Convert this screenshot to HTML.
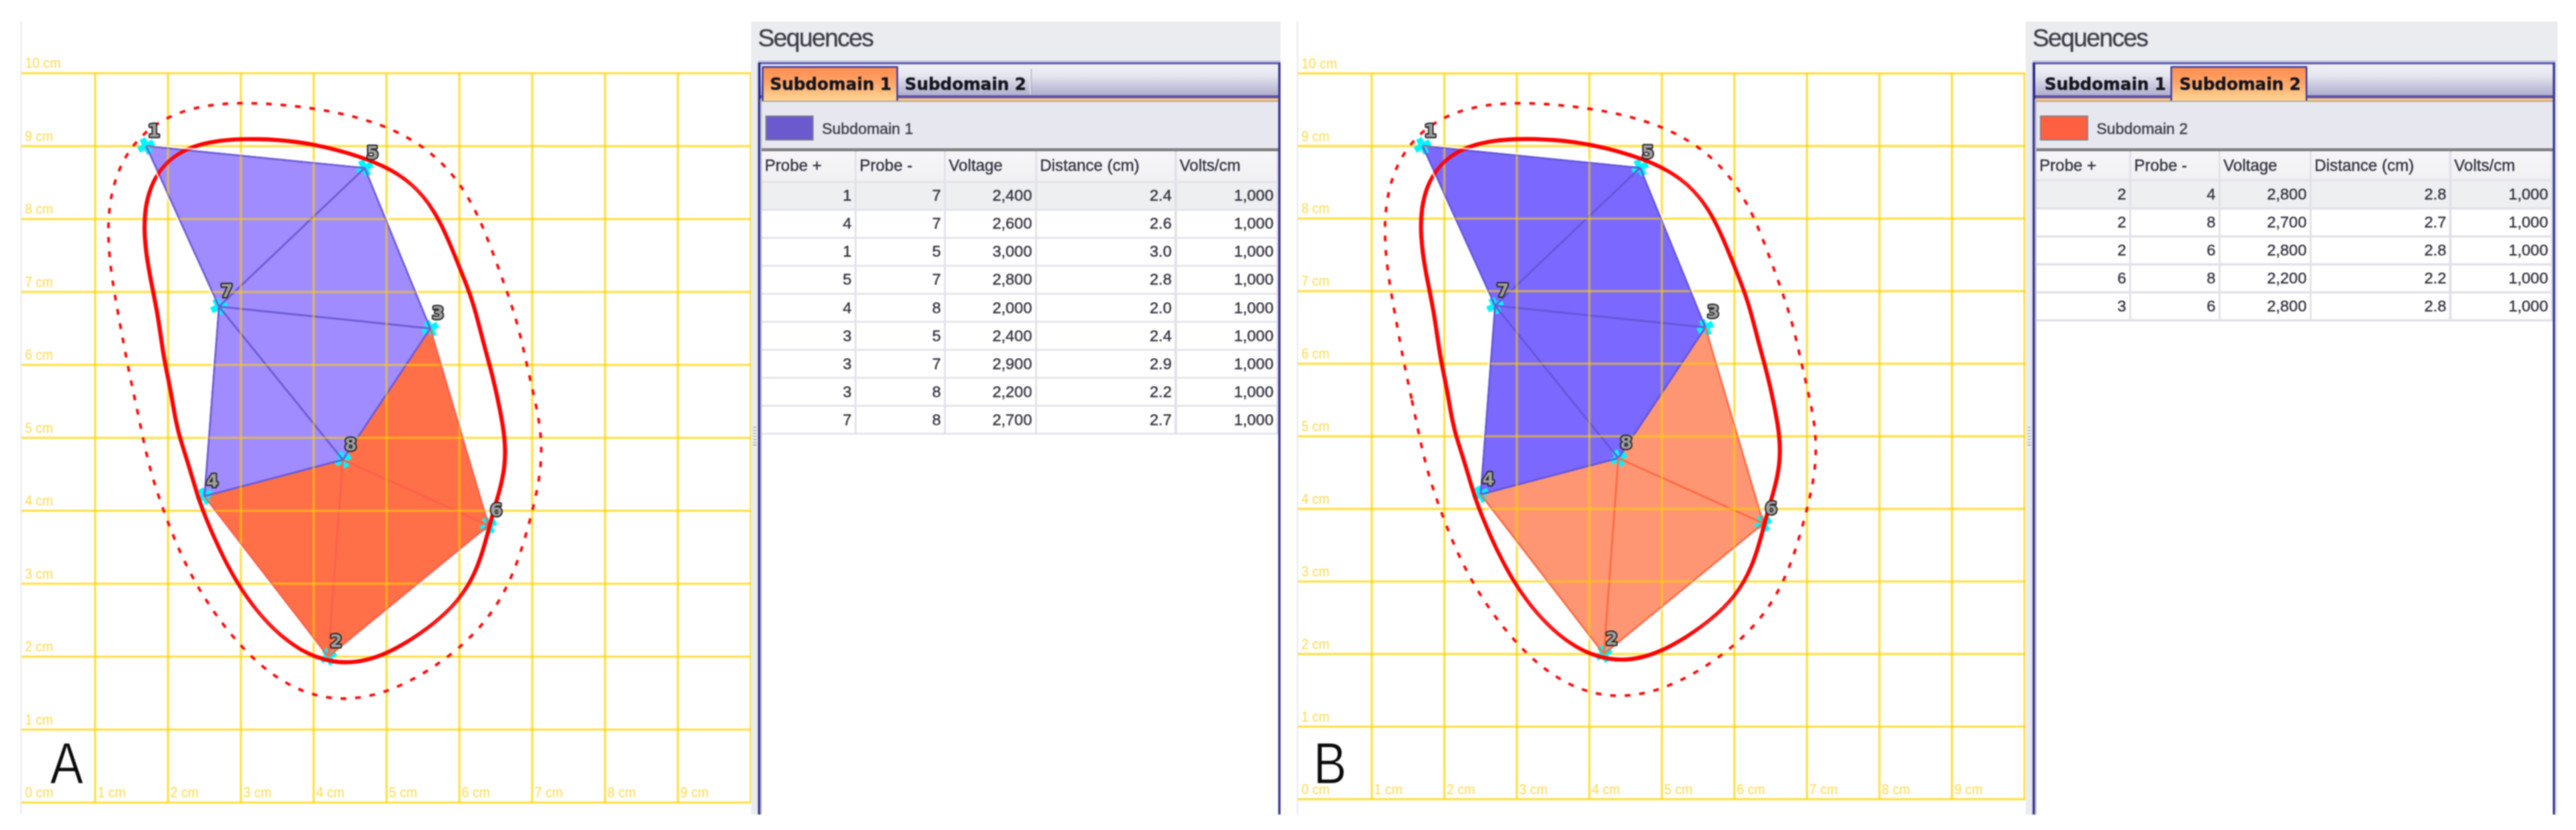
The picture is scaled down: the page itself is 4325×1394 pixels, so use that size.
<!DOCTYPE html>
<html lang="en"><head><meta charset="utf-8"><title>Sequences</title>
<style>
html,body{margin:0;padding:0;background:#fff}
body{width:4325px;height:1394px;position:relative;overflow:hidden;font-family:"Liberation Sans", "DejaVu Sans", sans-serif}
svg{position:absolute;left:0;top:0;filter:blur(1px)}
.seq{position:absolute;background:#EBECEF;overflow:hidden;margin:0;filter:blur(1px)}
.seq div{position:absolute}
.t{position:absolute;white-space:nowrap;margin:0;font-weight:normal;-webkit-text-stroke:0.45px currentColor;font-family:"Liberation Sans", "DejaVu Sans", sans-serif}
.b{font-weight:bold}
.dj{font-family:"DejaVu Sans","Liberation Sans",sans-serif}
</style></head><body>
<svg width="4325" height="1394" viewBox="0 0 4325 1394">
<g class="plot">
<rect x="34.0" y="36" width="3" height="1332" fill="#ECEEF2"/>
<g stroke="#FFD400" stroke-opacity="0.7" stroke-width="3.9"><line x1="36.0" y1="1347.9" x2="1262.0" y2="1347.9"/><line x1="36.0" y1="1225.4" x2="1262.0" y2="1225.4"/><line x1="36.0" y1="1102.9" x2="1262.0" y2="1102.9"/><line x1="36.0" y1="980.4" x2="1262.0" y2="980.4"/><line x1="36.0" y1="857.9" x2="1262.0" y2="857.9"/><line x1="36.0" y1="735.4" x2="1262.0" y2="735.4"/><line x1="36.0" y1="612.9" x2="1262.0" y2="612.9"/><line x1="36.0" y1="490.4" x2="1262.0" y2="490.4"/><line x1="36.0" y1="367.9" x2="1262.0" y2="367.9"/><line x1="36.0" y1="245.4" x2="1262.0" y2="245.4"/><line x1="36.0" y1="122.9" x2="1262.0" y2="122.9"/><line x1="159.8" y1="122.9" x2="159.8" y2="1347.9"/><line x1="282.1" y1="122.9" x2="282.1" y2="1347.9"/><line x1="404.4" y1="122.9" x2="404.4" y2="1347.9"/><line x1="526.7" y1="122.9" x2="526.7" y2="1347.9"/><line x1="649.0" y1="122.9" x2="649.0" y2="1347.9"/><line x1="771.3" y1="122.9" x2="771.3" y2="1347.9"/><line x1="893.6" y1="122.9" x2="893.6" y2="1347.9"/><line x1="1015.9" y1="122.9" x2="1015.9" y2="1347.9"/><line x1="1138.2" y1="122.9" x2="1138.2" y2="1347.9"/><line x1="1260.5" y1="122.9" x2="1260.5" y2="1347.9"/></g>
<polygon points="343.2,833.4 575.6,772.2 722.4,551.7 820.2,882.4 551.2,1102.9" fill="#FF7048"/><polygon points="245.4,245.4 612.3,282.2 722.4,551.7 575.6,772.2 343.2,833.4 367.7,514.9" fill="#A18CFF"/>
<g transform="translate(245.4 245.4) rotate(18)" stroke="#00F6FF" stroke-width="10.5"><line x1="-10" y1="-10" x2="10" y2="10"/><line x1="-10" y1="10" x2="10" y2="-10"/></g>
<g transform="translate(551.2 1102.9) rotate(18)" stroke="#00F6FF" stroke-width="10.5"><line x1="-10" y1="-10" x2="10" y2="10"/><line x1="-10" y1="10" x2="10" y2="-10"/></g>
<g transform="translate(722.4 551.7) rotate(18)" stroke="#00F6FF" stroke-width="10.5"><line x1="-10" y1="-10" x2="10" y2="10"/><line x1="-10" y1="10" x2="10" y2="-10"/></g>
<g transform="translate(343.2 833.4) rotate(18)" stroke="#00F6FF" stroke-width="10.5"><line x1="-10" y1="-10" x2="10" y2="10"/><line x1="-10" y1="10" x2="10" y2="-10"/></g>
<g transform="translate(612.3 282.2) rotate(18)" stroke="#00F6FF" stroke-width="10.5"><line x1="-10" y1="-10" x2="10" y2="10"/><line x1="-10" y1="10" x2="10" y2="-10"/></g>
<g transform="translate(820.2 882.4) rotate(18)" stroke="#00F6FF" stroke-width="10.5"><line x1="-10" y1="-10" x2="10" y2="10"/><line x1="-10" y1="10" x2="10" y2="-10"/></g>
<g transform="translate(367.7 514.9) rotate(18)" stroke="#00F6FF" stroke-width="10.5"><line x1="-10" y1="-10" x2="10" y2="10"/><line x1="-10" y1="10" x2="10" y2="-10"/></g>
<g transform="translate(575.6 772.2) rotate(18)" stroke="#00F6FF" stroke-width="10.5"><line x1="-10" y1="-10" x2="10" y2="10"/><line x1="-10" y1="10" x2="10" y2="-10"/></g>
<line x1="551.2" y1="1102.9" x2="343.2" y2="833.4" stroke="#FF5F4A" stroke-width="3.3"/><line x1="551.2" y1="1102.9" x2="575.6" y2="772.2" stroke="#FF5F4A" stroke-width="3.3"/><line x1="551.2" y1="1102.9" x2="820.2" y2="882.4" stroke="#FF5F4A" stroke-width="3.3"/><line x1="820.2" y1="882.4" x2="575.6" y2="772.2" stroke="#FF5F4A" stroke-width="3.3"/><line x1="722.4" y1="551.7" x2="820.2" y2="882.4" stroke="#FF5F4A" stroke-width="3.3"/><line x1="245.4" y1="245.4" x2="367.7" y2="514.9" stroke="#6C5CD6" stroke-width="3.3"/><line x1="343.2" y1="833.4" x2="367.7" y2="514.9" stroke="#6C5CD6" stroke-width="3.3"/><line x1="245.4" y1="245.4" x2="612.3" y2="282.2" stroke="#6C5CD6" stroke-width="3.3"/><line x1="612.3" y1="282.2" x2="367.7" y2="514.9" stroke="#6C5CD6" stroke-width="3.3"/><line x1="343.2" y1="833.4" x2="575.6" y2="772.2" stroke="#6C5CD6" stroke-width="3.3"/><line x1="722.4" y1="551.7" x2="612.3" y2="282.2" stroke="#6C5CD6" stroke-width="3.3"/><line x1="722.4" y1="551.7" x2="367.7" y2="514.9" stroke="#6C5CD6" stroke-width="3.3"/><line x1="722.4" y1="551.7" x2="575.6" y2="772.2" stroke="#6C5CD6" stroke-width="3.3"/><line x1="367.7" y1="514.9" x2="575.6" y2="772.2" stroke="#6C5CD6" stroke-width="3.3"/>
<clipPath id="clipA"><polygon points="245.4,245.4 612.3,282.2 722.4,551.7 820.2,882.4 551.2,1102.9 343.2,833.4 367.7,514.9"/></clipPath>
<g stroke="#FFD400" stroke-opacity="0.56" stroke-width="3.9" clip-path="url(#clipA)"><line x1="36.0" y1="1347.9" x2="1262.0" y2="1347.9"/><line x1="36.0" y1="1225.4" x2="1262.0" y2="1225.4"/><line x1="36.0" y1="1102.9" x2="1262.0" y2="1102.9"/><line x1="36.0" y1="980.4" x2="1262.0" y2="980.4"/><line x1="36.0" y1="857.9" x2="1262.0" y2="857.9"/><line x1="36.0" y1="735.4" x2="1262.0" y2="735.4"/><line x1="36.0" y1="612.9" x2="1262.0" y2="612.9"/><line x1="36.0" y1="490.4" x2="1262.0" y2="490.4"/><line x1="36.0" y1="367.9" x2="1262.0" y2="367.9"/><line x1="36.0" y1="245.4" x2="1262.0" y2="245.4"/><line x1="36.0" y1="122.9" x2="1262.0" y2="122.9"/><line x1="159.8" y1="122.9" x2="159.8" y2="1347.9"/><line x1="282.1" y1="122.9" x2="282.1" y2="1347.9"/><line x1="404.4" y1="122.9" x2="404.4" y2="1347.9"/><line x1="526.7" y1="122.9" x2="526.7" y2="1347.9"/><line x1="649.0" y1="122.9" x2="649.0" y2="1347.9"/><line x1="771.3" y1="122.9" x2="771.3" y2="1347.9"/><line x1="893.6" y1="122.9" x2="893.6" y2="1347.9"/><line x1="1015.9" y1="122.9" x2="1015.9" y2="1347.9"/><line x1="1138.2" y1="122.9" x2="1138.2" y2="1347.9"/><line x1="1260.5" y1="122.9" x2="1260.5" y2="1347.9"/></g>
<g fill="#FFD94A" font-size="24.6" font-family='Liberation Sans, DejaVu Sans, sans-serif'><text x="42.0" y="1216.7" textLength="47" lengthAdjust="spacingAndGlyphs">1 cm</text><text x="42.0" y="1094.2" textLength="47" lengthAdjust="spacingAndGlyphs">2 cm</text><text x="42.0" y="971.7" textLength="47" lengthAdjust="spacingAndGlyphs">3 cm</text><text x="42.0" y="849.2" textLength="47" lengthAdjust="spacingAndGlyphs">4 cm</text><text x="42.0" y="726.7" textLength="47" lengthAdjust="spacingAndGlyphs">5 cm</text><text x="42.0" y="604.2" textLength="47" lengthAdjust="spacingAndGlyphs">6 cm</text><text x="42.0" y="481.7" textLength="47" lengthAdjust="spacingAndGlyphs">7 cm</text><text x="42.0" y="359.2" textLength="47" lengthAdjust="spacingAndGlyphs">8 cm</text><text x="42.0" y="236.7" textLength="47" lengthAdjust="spacingAndGlyphs">9 cm</text><text x="42.0" y="114.2" textLength="60" lengthAdjust="spacingAndGlyphs">10 cm</text><text x="42.0" y="1339.2" textLength="47.5" lengthAdjust="spacingAndGlyphs">0 cm</text><text x="163.8" y="1339.2" textLength="47.5" lengthAdjust="spacingAndGlyphs">1 cm</text><text x="286.1" y="1339.2" textLength="47.5" lengthAdjust="spacingAndGlyphs">2 cm</text><text x="408.4" y="1339.2" textLength="47.5" lengthAdjust="spacingAndGlyphs">3 cm</text><text x="530.7" y="1339.2" textLength="47.5" lengthAdjust="spacingAndGlyphs">4 cm</text><text x="653.0" y="1339.2" textLength="47.5" lengthAdjust="spacingAndGlyphs">5 cm</text><text x="775.3" y="1339.2" textLength="47.5" lengthAdjust="spacingAndGlyphs">6 cm</text><text x="897.6" y="1339.2" textLength="47.5" lengthAdjust="spacingAndGlyphs">7 cm</text><text x="1019.9" y="1339.2" textLength="47.5" lengthAdjust="spacingAndGlyphs">8 cm</text><text x="1142.2" y="1339.2" textLength="47.5" lengthAdjust="spacingAndGlyphs">9 cm</text></g>
<g fill="none" stroke="#FF0000" stroke-width="2.5">
<path transform="translate(-2.2 0)" d="M289.1 672.0C288.1 666.0 287.0 660.0 285.8 653.9C284.7 647.7 283.4 641.5 282.1 635.1C280.8 628.6 279.5 622.1 278.2 615.3C276.9 608.5 275.6 601.6 274.4 594.4C273.2 587.2 272.2 579.9 271.0 572.3C269.9 564.6 268.8 556.8 267.5 548.5C266.3 540.1 264.9 531.5 263.3 522.2C261.6 512.9 259.7 503.1 257.6 492.4C255.6 481.8 253.1 470.4 251.1 458.4C249.0 446.4 246.6 433.5 245.2 420.4C243.8 407.4 242.5 393.4 242.7 380.1C242.9 366.7 243.8 352.9 246.4 340.4C249.0 327.8 252.9 315.5 258.1 304.8C263.4 294.1 270.3 284.4 278.0 276.2C285.8 268.0 295.1 261.3 304.7 255.8C314.4 250.3 325.1 246.4 335.9 243.2C346.6 240.0 357.9 238.1 369.1 236.6C380.2 235.0 391.6 234.4 402.7 233.9C413.8 233.5 424.8 233.5 435.7 233.8C446.6 234.0 457.4 234.6 468.0 235.4C478.6 236.3 489.1 237.4 499.5 238.8C509.8 240.2 520.0 241.9 530.1 243.9C540.1 245.9 550.0 248.2 559.7 250.6C569.4 253.1 579.0 255.7 588.4 258.6C597.9 261.6 607.2 264.6 616.2 268.0C625.3 271.5 634.3 275.1 642.9 279.2C651.6 283.4 660.1 287.9 668.1 293.1C676.1 298.3 683.9 304.0 691.1 310.4C698.3 316.8 705.0 323.8 711.2 331.3C717.3 338.7 722.9 346.8 728.0 355.0C733.1 363.1 737.6 371.7 741.9 380.1C746.1 388.5 749.8 397.1 753.4 405.3C757.0 413.5 760.3 421.6 763.5 429.4C766.7 437.2 769.7 444.7 772.7 452.1C775.7 459.5 778.6 466.6 781.3 473.8C784.0 480.9 786.6 487.8 789.0 494.7C791.4 501.7 793.6 508.5 795.7 515.4C797.8 522.2 799.6 529.0 801.4 535.6C803.3 542.3 804.9 549.0 806.6 555.5C808.3 562.1 810.0 568.5 811.7 574.9C813.4 581.4 815.1 587.7 816.8 594.1C818.5 600.4 820.2 606.8 821.9 613.1C823.6 619.5 825.3 625.9 826.9 632.4C828.5 638.9 830.0 645.4 831.5 652.0C833.1 658.6 834.5 665.2 835.9 672.0C837.3 678.8 838.8 685.6 840.1 692.6C841.4 699.6 842.8 706.8 843.9 714.0C845.0 721.3 846.1 728.7 846.8 736.1C847.5 743.6 848.0 751.3 848.0 758.9C848.0 766.5 847.6 774.2 846.8 781.8C846.0 789.5 844.7 797.1 843.1 804.7C841.6 812.4 839.6 819.9 837.6 827.6C835.5 835.2 833.2 842.8 831.0 850.7C828.8 858.6 826.5 866.6 824.3 874.9C822.0 883.2 819.8 891.8 817.4 900.6C814.9 909.3 812.5 918.5 809.6 927.5C806.6 936.6 803.5 945.9 799.7 954.8C795.8 963.8 791.5 972.8 786.6 981.2C781.6 989.7 776.0 997.8 769.9 1005.5C763.9 1013.2 757.1 1020.4 750.1 1027.2C743.1 1034.1 735.5 1040.5 727.8 1046.8C720.0 1053.0 712.0 1058.9 703.6 1064.7C695.3 1070.4 686.8 1076.0 677.9 1081.1C669.1 1086.3 660.0 1091.3 650.6 1095.6C641.2 1099.8 631.5 1103.7 621.6 1106.4C611.7 1109.1 601.4 1111.2 591.2 1111.9C581.0 1112.6 570.5 1112.3 560.3 1110.7C550.1 1109.2 539.8 1106.4 530.0 1102.6C520.1 1098.9 510.4 1093.9 501.2 1088.4C492.1 1082.8 483.2 1076.3 474.9 1069.5C466.6 1062.7 458.7 1055.1 451.4 1047.6C444.0 1040.0 437.1 1032.0 430.6 1024.0C424.1 1016.1 418.2 1007.9 412.6 999.8C406.9 991.7 401.8 983.6 397.0 975.5C392.1 967.5 387.7 959.5 383.5 951.7C379.3 943.9 375.5 936.2 371.8 928.7C368.2 921.2 364.8 913.9 361.6 906.8C358.3 899.7 355.3 892.7 352.4 885.9C349.5 879.1 346.7 872.5 344.2 865.9C341.6 859.4 339.2 853.0 336.9 846.6C334.7 840.2 332.6 834.0 330.6 827.8C328.6 821.6 326.8 815.5 325.0 809.5C323.2 803.5 321.5 797.6 319.7 791.8C318.0 786.0 316.3 780.3 314.5 774.6C312.8 769.0 311.0 763.4 309.2 757.8C307.5 752.2 305.7 746.7 304.1 741.1C302.4 735.5 300.8 729.9 299.4 724.2C298.0 718.5 296.7 712.8 295.5 707.1C294.3 701.3 293.2 695.5 292.2 689.7C291.1 683.8 290.2 678.0 289.1 672.0Z"/>
<path transform="translate(2.2 0)" d="M289.1 672.0C288.1 666.0 287.0 660.0 285.8 653.9C284.7 647.7 283.4 641.5 282.1 635.1C280.8 628.6 279.5 622.1 278.2 615.3C276.9 608.5 275.6 601.6 274.4 594.4C273.2 587.2 272.2 579.9 271.0 572.3C269.9 564.6 268.8 556.8 267.5 548.5C266.3 540.1 264.9 531.5 263.3 522.2C261.6 512.9 259.7 503.1 257.6 492.4C255.6 481.8 253.1 470.4 251.1 458.4C249.0 446.4 246.6 433.5 245.2 420.4C243.8 407.4 242.5 393.4 242.7 380.1C242.9 366.7 243.8 352.9 246.4 340.4C249.0 327.8 252.9 315.5 258.1 304.8C263.4 294.1 270.3 284.4 278.0 276.2C285.8 268.0 295.1 261.3 304.7 255.8C314.4 250.3 325.1 246.4 335.9 243.2C346.6 240.0 357.9 238.1 369.1 236.6C380.2 235.0 391.6 234.4 402.7 233.9C413.8 233.5 424.8 233.5 435.7 233.8C446.6 234.0 457.4 234.6 468.0 235.4C478.6 236.3 489.1 237.4 499.5 238.8C509.8 240.2 520.0 241.9 530.1 243.9C540.1 245.9 550.0 248.2 559.7 250.6C569.4 253.1 579.0 255.7 588.4 258.6C597.9 261.6 607.2 264.6 616.2 268.0C625.3 271.5 634.3 275.1 642.9 279.2C651.6 283.4 660.1 287.9 668.1 293.1C676.1 298.3 683.9 304.0 691.1 310.4C698.3 316.8 705.0 323.8 711.2 331.3C717.3 338.7 722.9 346.8 728.0 355.0C733.1 363.1 737.6 371.7 741.9 380.1C746.1 388.5 749.8 397.1 753.4 405.3C757.0 413.5 760.3 421.6 763.5 429.4C766.7 437.2 769.7 444.7 772.7 452.1C775.7 459.5 778.6 466.6 781.3 473.8C784.0 480.9 786.6 487.8 789.0 494.7C791.4 501.7 793.6 508.5 795.7 515.4C797.8 522.2 799.6 529.0 801.4 535.6C803.3 542.3 804.9 549.0 806.6 555.5C808.3 562.1 810.0 568.5 811.7 574.9C813.4 581.4 815.1 587.7 816.8 594.1C818.5 600.4 820.2 606.8 821.9 613.1C823.6 619.5 825.3 625.9 826.9 632.4C828.5 638.9 830.0 645.4 831.5 652.0C833.1 658.6 834.5 665.2 835.9 672.0C837.3 678.8 838.8 685.6 840.1 692.6C841.4 699.6 842.8 706.8 843.9 714.0C845.0 721.3 846.1 728.7 846.8 736.1C847.5 743.6 848.0 751.3 848.0 758.9C848.0 766.5 847.6 774.2 846.8 781.8C846.0 789.5 844.7 797.1 843.1 804.7C841.6 812.4 839.6 819.9 837.6 827.6C835.5 835.2 833.2 842.8 831.0 850.7C828.8 858.6 826.5 866.6 824.3 874.9C822.0 883.2 819.8 891.8 817.4 900.6C814.9 909.3 812.5 918.5 809.6 927.5C806.6 936.6 803.5 945.9 799.7 954.8C795.8 963.8 791.5 972.8 786.6 981.2C781.6 989.7 776.0 997.8 769.9 1005.5C763.9 1013.2 757.1 1020.4 750.1 1027.2C743.1 1034.1 735.5 1040.5 727.8 1046.8C720.0 1053.0 712.0 1058.9 703.6 1064.7C695.3 1070.4 686.8 1076.0 677.9 1081.1C669.1 1086.3 660.0 1091.3 650.6 1095.6C641.2 1099.8 631.5 1103.7 621.6 1106.4C611.7 1109.1 601.4 1111.2 591.2 1111.9C581.0 1112.6 570.5 1112.3 560.3 1110.7C550.1 1109.2 539.8 1106.4 530.0 1102.6C520.1 1098.9 510.4 1093.9 501.2 1088.4C492.1 1082.8 483.2 1076.3 474.9 1069.5C466.6 1062.7 458.7 1055.1 451.4 1047.6C444.0 1040.0 437.1 1032.0 430.6 1024.0C424.1 1016.1 418.2 1007.9 412.6 999.8C406.9 991.7 401.8 983.6 397.0 975.5C392.1 967.5 387.7 959.5 383.5 951.7C379.3 943.9 375.5 936.2 371.8 928.7C368.2 921.2 364.8 913.9 361.6 906.8C358.3 899.7 355.3 892.7 352.4 885.9C349.5 879.1 346.7 872.5 344.2 865.9C341.6 859.4 339.2 853.0 336.9 846.6C334.7 840.2 332.6 834.0 330.6 827.8C328.6 821.6 326.8 815.5 325.0 809.5C323.2 803.5 321.5 797.6 319.7 791.8C318.0 786.0 316.3 780.3 314.5 774.6C312.8 769.0 311.0 763.4 309.2 757.8C307.5 752.2 305.7 746.7 304.1 741.1C302.4 735.5 300.8 729.9 299.4 724.2C298.0 718.5 296.7 712.8 295.5 707.1C294.3 701.3 293.2 695.5 292.2 689.7C291.1 683.8 290.2 678.0 289.1 672.0Z"/>
<path transform="translate(0 -2.2)" d="M289.1 672.0C288.1 666.0 287.0 660.0 285.8 653.9C284.7 647.7 283.4 641.5 282.1 635.1C280.8 628.6 279.5 622.1 278.2 615.3C276.9 608.5 275.6 601.6 274.4 594.4C273.2 587.2 272.2 579.9 271.0 572.3C269.9 564.6 268.8 556.8 267.5 548.5C266.3 540.1 264.9 531.5 263.3 522.2C261.6 512.9 259.7 503.1 257.6 492.4C255.6 481.8 253.1 470.4 251.1 458.4C249.0 446.4 246.6 433.5 245.2 420.4C243.8 407.4 242.5 393.4 242.7 380.1C242.9 366.7 243.8 352.9 246.4 340.4C249.0 327.8 252.9 315.5 258.1 304.8C263.4 294.1 270.3 284.4 278.0 276.2C285.8 268.0 295.1 261.3 304.7 255.8C314.4 250.3 325.1 246.4 335.9 243.2C346.6 240.0 357.9 238.1 369.1 236.6C380.2 235.0 391.6 234.4 402.7 233.9C413.8 233.5 424.8 233.5 435.7 233.8C446.6 234.0 457.4 234.6 468.0 235.4C478.6 236.3 489.1 237.4 499.5 238.8C509.8 240.2 520.0 241.9 530.1 243.9C540.1 245.9 550.0 248.2 559.7 250.6C569.4 253.1 579.0 255.7 588.4 258.6C597.9 261.6 607.2 264.6 616.2 268.0C625.3 271.5 634.3 275.1 642.9 279.2C651.6 283.4 660.1 287.9 668.1 293.1C676.1 298.3 683.9 304.0 691.1 310.4C698.3 316.8 705.0 323.8 711.2 331.3C717.3 338.7 722.9 346.8 728.0 355.0C733.1 363.1 737.6 371.7 741.9 380.1C746.1 388.5 749.8 397.1 753.4 405.3C757.0 413.5 760.3 421.6 763.5 429.4C766.7 437.2 769.7 444.7 772.7 452.1C775.7 459.5 778.6 466.6 781.3 473.8C784.0 480.9 786.6 487.8 789.0 494.7C791.4 501.7 793.6 508.5 795.7 515.4C797.8 522.2 799.6 529.0 801.4 535.6C803.3 542.3 804.9 549.0 806.6 555.5C808.3 562.1 810.0 568.5 811.7 574.9C813.4 581.4 815.1 587.7 816.8 594.1C818.5 600.4 820.2 606.8 821.9 613.1C823.6 619.5 825.3 625.9 826.9 632.4C828.5 638.9 830.0 645.4 831.5 652.0C833.1 658.6 834.5 665.2 835.9 672.0C837.3 678.8 838.8 685.6 840.1 692.6C841.4 699.6 842.8 706.8 843.9 714.0C845.0 721.3 846.1 728.7 846.8 736.1C847.5 743.6 848.0 751.3 848.0 758.9C848.0 766.5 847.6 774.2 846.8 781.8C846.0 789.5 844.7 797.1 843.1 804.7C841.6 812.4 839.6 819.9 837.6 827.6C835.5 835.2 833.2 842.8 831.0 850.7C828.8 858.6 826.5 866.6 824.3 874.9C822.0 883.2 819.8 891.8 817.4 900.6C814.9 909.3 812.5 918.5 809.6 927.5C806.6 936.6 803.5 945.9 799.7 954.8C795.8 963.8 791.5 972.8 786.6 981.2C781.6 989.7 776.0 997.8 769.9 1005.5C763.9 1013.2 757.1 1020.4 750.1 1027.2C743.1 1034.1 735.5 1040.5 727.8 1046.8C720.0 1053.0 712.0 1058.9 703.6 1064.7C695.3 1070.4 686.8 1076.0 677.9 1081.1C669.1 1086.3 660.0 1091.3 650.6 1095.6C641.2 1099.8 631.5 1103.7 621.6 1106.4C611.7 1109.1 601.4 1111.2 591.2 1111.9C581.0 1112.6 570.5 1112.3 560.3 1110.7C550.1 1109.2 539.8 1106.4 530.0 1102.6C520.1 1098.9 510.4 1093.9 501.2 1088.4C492.1 1082.8 483.2 1076.3 474.9 1069.5C466.6 1062.7 458.7 1055.1 451.4 1047.6C444.0 1040.0 437.1 1032.0 430.6 1024.0C424.1 1016.1 418.2 1007.9 412.6 999.8C406.9 991.7 401.8 983.6 397.0 975.5C392.1 967.5 387.7 959.5 383.5 951.7C379.3 943.9 375.5 936.2 371.8 928.7C368.2 921.2 364.8 913.9 361.6 906.8C358.3 899.7 355.3 892.7 352.4 885.9C349.5 879.1 346.7 872.5 344.2 865.9C341.6 859.4 339.2 853.0 336.9 846.6C334.7 840.2 332.6 834.0 330.6 827.8C328.6 821.6 326.8 815.5 325.0 809.5C323.2 803.5 321.5 797.6 319.7 791.8C318.0 786.0 316.3 780.3 314.5 774.6C312.8 769.0 311.0 763.4 309.2 757.8C307.5 752.2 305.7 746.7 304.1 741.1C302.4 735.5 300.8 729.9 299.4 724.2C298.0 718.5 296.7 712.8 295.5 707.1C294.3 701.3 293.2 695.5 292.2 689.7C291.1 683.8 290.2 678.0 289.1 672.0Z"/>
<path transform="translate(0 2.2)" d="M289.1 672.0C288.1 666.0 287.0 660.0 285.8 653.9C284.7 647.7 283.4 641.5 282.1 635.1C280.8 628.6 279.5 622.1 278.2 615.3C276.9 608.5 275.6 601.6 274.4 594.4C273.2 587.2 272.2 579.9 271.0 572.3C269.9 564.6 268.8 556.8 267.5 548.5C266.3 540.1 264.9 531.5 263.3 522.2C261.6 512.9 259.7 503.1 257.6 492.4C255.6 481.8 253.1 470.4 251.1 458.4C249.0 446.4 246.6 433.5 245.2 420.4C243.8 407.4 242.5 393.4 242.7 380.1C242.9 366.7 243.8 352.9 246.4 340.4C249.0 327.8 252.9 315.5 258.1 304.8C263.4 294.1 270.3 284.4 278.0 276.2C285.8 268.0 295.1 261.3 304.7 255.8C314.4 250.3 325.1 246.4 335.9 243.2C346.6 240.0 357.9 238.1 369.1 236.6C380.2 235.0 391.6 234.4 402.7 233.9C413.8 233.5 424.8 233.5 435.7 233.8C446.6 234.0 457.4 234.6 468.0 235.4C478.6 236.3 489.1 237.4 499.5 238.8C509.8 240.2 520.0 241.9 530.1 243.9C540.1 245.9 550.0 248.2 559.7 250.6C569.4 253.1 579.0 255.7 588.4 258.6C597.9 261.6 607.2 264.6 616.2 268.0C625.3 271.5 634.3 275.1 642.9 279.2C651.6 283.4 660.1 287.9 668.1 293.1C676.1 298.3 683.9 304.0 691.1 310.4C698.3 316.8 705.0 323.8 711.2 331.3C717.3 338.7 722.9 346.8 728.0 355.0C733.1 363.1 737.6 371.7 741.9 380.1C746.1 388.5 749.8 397.1 753.4 405.3C757.0 413.5 760.3 421.6 763.5 429.4C766.7 437.2 769.7 444.7 772.7 452.1C775.7 459.5 778.6 466.6 781.3 473.8C784.0 480.9 786.6 487.8 789.0 494.7C791.4 501.7 793.6 508.5 795.7 515.4C797.8 522.2 799.6 529.0 801.4 535.6C803.3 542.3 804.9 549.0 806.6 555.5C808.3 562.1 810.0 568.5 811.7 574.9C813.4 581.4 815.1 587.7 816.8 594.1C818.5 600.4 820.2 606.8 821.9 613.1C823.6 619.5 825.3 625.9 826.9 632.4C828.5 638.9 830.0 645.4 831.5 652.0C833.1 658.6 834.5 665.2 835.9 672.0C837.3 678.8 838.8 685.6 840.1 692.6C841.4 699.6 842.8 706.8 843.9 714.0C845.0 721.3 846.1 728.7 846.8 736.1C847.5 743.6 848.0 751.3 848.0 758.9C848.0 766.5 847.6 774.2 846.8 781.8C846.0 789.5 844.7 797.1 843.1 804.7C841.6 812.4 839.6 819.9 837.6 827.6C835.5 835.2 833.2 842.8 831.0 850.7C828.8 858.6 826.5 866.6 824.3 874.9C822.0 883.2 819.8 891.8 817.4 900.6C814.9 909.3 812.5 918.5 809.6 927.5C806.6 936.6 803.5 945.9 799.7 954.8C795.8 963.8 791.5 972.8 786.6 981.2C781.6 989.7 776.0 997.8 769.9 1005.5C763.9 1013.2 757.1 1020.4 750.1 1027.2C743.1 1034.1 735.5 1040.5 727.8 1046.8C720.0 1053.0 712.0 1058.9 703.6 1064.7C695.3 1070.4 686.8 1076.0 677.9 1081.1C669.1 1086.3 660.0 1091.3 650.6 1095.6C641.2 1099.8 631.5 1103.7 621.6 1106.4C611.7 1109.1 601.4 1111.2 591.2 1111.9C581.0 1112.6 570.5 1112.3 560.3 1110.7C550.1 1109.2 539.8 1106.4 530.0 1102.6C520.1 1098.9 510.4 1093.9 501.2 1088.4C492.1 1082.8 483.2 1076.3 474.9 1069.5C466.6 1062.7 458.7 1055.1 451.4 1047.6C444.0 1040.0 437.1 1032.0 430.6 1024.0C424.1 1016.1 418.2 1007.9 412.6 999.8C406.9 991.7 401.8 983.6 397.0 975.5C392.1 967.5 387.7 959.5 383.5 951.7C379.3 943.9 375.5 936.2 371.8 928.7C368.2 921.2 364.8 913.9 361.6 906.8C358.3 899.7 355.3 892.7 352.4 885.9C349.5 879.1 346.7 872.5 344.2 865.9C341.6 859.4 339.2 853.0 336.9 846.6C334.7 840.2 332.6 834.0 330.6 827.8C328.6 821.6 326.8 815.5 325.0 809.5C323.2 803.5 321.5 797.6 319.7 791.8C318.0 786.0 316.3 780.3 314.5 774.6C312.8 769.0 311.0 763.4 309.2 757.8C307.5 752.2 305.7 746.7 304.1 741.1C302.4 735.5 300.8 729.9 299.4 724.2C298.0 718.5 296.7 712.8 295.5 707.1C294.3 701.3 293.2 695.5 292.2 689.7C291.1 683.8 290.2 678.0 289.1 672.0Z"/>
</g>
<path fill="none" stroke="#FF0808" stroke-width="4.5" stroke-dasharray="9.6 14.8" d="M226.8 672.0C225.2 664.6 223.6 657.1 222.0 649.4C220.4 641.7 218.7 633.9 217.1 625.9C215.5 617.9 213.9 609.7 212.2 601.3C210.6 592.8 209.0 584.2 207.3 575.2C205.6 566.2 203.9 556.9 202.1 547.2C200.3 537.5 198.5 527.5 196.6 516.9C194.8 506.3 192.8 495.3 191.0 483.8C189.2 472.2 187.3 460.1 185.9 447.6C184.5 435.1 183.1 421.9 182.5 408.6C182.0 395.4 181.7 381.5 182.6 367.9C183.4 354.3 184.9 340.3 187.7 327.0C190.5 313.7 194.2 300.3 199.3 288.0C204.3 275.7 210.5 263.8 217.8 253.2C225.1 242.6 233.7 232.8 243.0 224.3C252.4 215.8 262.9 208.5 273.8 202.3C284.7 196.1 296.6 191.2 308.5 187.2C320.5 183.2 333.0 180.4 345.5 178.2C357.9 176.0 370.7 174.9 383.2 174.0C395.7 173.2 408.3 173.2 420.7 173.4C433.0 173.5 445.3 174.2 457.4 175.0C469.4 175.8 481.3 176.9 493.1 178.2C504.9 179.5 516.5 181.0 527.9 182.8C539.4 184.6 550.7 186.5 561.9 188.8C573.1 191.0 584.1 193.5 595.0 196.4C605.9 199.3 616.6 202.4 627.2 206.1C637.7 209.7 648.1 213.7 658.1 218.2C668.2 222.7 678.1 227.7 687.6 233.2C697.0 238.7 706.3 244.8 715.0 251.3C723.7 257.9 732.0 265.0 739.8 272.6C747.6 280.2 754.9 288.3 761.7 296.7C768.4 305.1 774.7 314.0 780.4 323.0C786.1 332.0 791.3 341.4 796.1 350.6C800.9 359.9 805.1 369.3 809.2 378.6C813.2 387.8 816.9 397.1 820.4 406.1C823.9 415.0 827.2 423.9 830.4 432.5C833.6 441.2 836.7 449.6 839.7 457.9C842.7 466.2 845.6 474.3 848.5 482.4C851.3 490.4 854.1 498.3 856.7 506.3C859.3 514.2 861.9 522.0 864.2 529.9C866.6 537.7 868.7 545.6 870.8 553.4C872.9 561.3 874.8 569.1 876.6 576.9C878.5 584.7 880.2 592.5 882.0 600.4C883.7 608.2 885.4 616.0 887.2 623.9C889.0 631.8 890.8 639.7 892.6 647.7C894.4 655.7 896.3 663.8 898.1 672.0C899.8 680.2 901.6 688.6 903.0 697.0C904.5 705.5 905.9 714.1 906.8 722.8C907.7 731.6 908.4 740.4 908.6 749.3C908.8 758.1 908.5 767.1 908.0 776.1C907.4 785.0 906.3 794.0 905.0 803.0C903.7 812.0 902.0 821.0 900.1 830.1C898.2 839.2 896.1 848.2 893.8 857.5C891.5 866.7 889.1 875.9 886.5 885.4C883.8 894.8 881.1 904.4 878.1 914.0C875.1 923.7 871.9 933.5 868.3 943.3C864.7 953.1 860.9 963.0 856.5 972.8C852.1 982.5 847.3 992.3 841.9 1001.7C836.5 1011.2 830.6 1020.5 824.2 1029.4C817.8 1038.3 810.9 1047.0 803.5 1055.3C796.1 1063.5 788.2 1071.4 780.0 1079.1C771.8 1086.7 763.1 1093.9 754.2 1100.9C745.2 1107.8 735.9 1114.5 726.3 1120.8C716.7 1127.1 706.8 1133.2 696.6 1138.7C686.4 1144.2 675.9 1149.5 665.2 1154.0C654.4 1158.4 643.3 1162.5 632.0 1165.5C620.8 1168.6 609.2 1171.0 597.6 1172.1C586.0 1173.3 574.1 1173.6 562.5 1172.6C550.8 1171.7 539.1 1169.6 527.7 1166.5C516.4 1163.4 505.1 1159.0 494.3 1153.9C483.6 1148.8 473.1 1142.6 463.2 1135.9C453.3 1129.2 443.8 1121.6 434.8 1113.9C425.9 1106.1 417.4 1097.7 409.4 1089.3C401.4 1081.0 393.9 1072.3 386.8 1063.6C379.6 1055.0 373.0 1046.3 366.7 1037.6C360.3 1029.0 354.4 1020.4 348.8 1011.8C343.2 1003.2 338.0 994.7 333.0 986.3C328.1 977.8 323.5 969.4 319.1 961.1C314.8 952.8 310.8 944.5 306.9 936.4C303.1 928.3 299.6 920.2 296.2 912.3C292.8 904.3 289.7 896.5 286.6 888.8C283.6 881.1 280.7 873.5 278.0 866.0C275.2 858.5 272.6 851.2 270.0 843.8C267.5 836.5 265.0 829.3 262.7 822.1C260.4 814.9 258.2 807.8 256.1 800.6C254.0 793.5 252.1 786.4 250.3 779.3C248.4 772.2 246.7 765.1 245.1 758.0C243.5 750.9 241.9 743.8 240.4 736.7C238.9 729.6 237.4 722.6 236.0 715.4C234.5 708.3 233.0 701.2 231.5 693.9C229.9 686.7 228.4 679.4 226.8 672.0Z"/>
<g stroke="#FFFFFF" stroke-opacity="0.72" stroke-width="3.2"><line x1="259.6" y1="243.7" x2="598.7" y2="277.7"/><line x1="620.5" y1="293.9" x2="720.0" y2="537.5"/><line x1="341.2" y1="819.2" x2="363.5" y2="528.6"/><line x1="359.1" y1="503.4" x2="248.4" y2="259.4"/><line x1="729.3" y1="564.2" x2="819.2" y2="868.1"/><line x1="811.4" y1="893.7" x2="564.0" y2="1096.4"/><line x1="540.2" y1="1093.7" x2="349.3" y2="846.4"/></g>
<text x="248.0" y="229.8" font-family="DejaVu Sans, Liberation Sans, sans-serif" font-weight="bold" font-size="30" fill="#A0A0A0" stroke="#262626" stroke-width="4.4" paint-order="stroke" stroke-linejoin="round">1</text>
<text x="553.8" y="1087.3" font-family="DejaVu Sans, Liberation Sans, sans-serif" font-weight="bold" font-size="30" fill="#A0A0A0" stroke="#262626" stroke-width="4.4" paint-order="stroke" stroke-linejoin="round">2</text>
<text x="725.0" y="536.1" font-family="DejaVu Sans, Liberation Sans, sans-serif" font-weight="bold" font-size="30" fill="#A0A0A0" stroke="#262626" stroke-width="4.4" paint-order="stroke" stroke-linejoin="round">3</text>
<text x="345.9" y="817.8" font-family="DejaVu Sans, Liberation Sans, sans-serif" font-weight="bold" font-size="30" fill="#A0A0A0" stroke="#262626" stroke-width="4.4" paint-order="stroke" stroke-linejoin="round">4</text>
<text x="614.9" y="266.6" font-family="DejaVu Sans, Liberation Sans, sans-serif" font-weight="bold" font-size="30" fill="#A0A0A0" stroke="#262626" stroke-width="4.4" paint-order="stroke" stroke-linejoin="round">5</text>
<text x="822.8" y="866.8" font-family="DejaVu Sans, Liberation Sans, sans-serif" font-weight="bold" font-size="30" fill="#A0A0A0" stroke="#262626" stroke-width="4.4" paint-order="stroke" stroke-linejoin="round">6</text>
<text x="370.3" y="499.3" font-family="DejaVu Sans, Liberation Sans, sans-serif" font-weight="bold" font-size="30" fill="#A0A0A0" stroke="#262626" stroke-width="4.4" paint-order="stroke" stroke-linejoin="round">7</text>
<text x="578.2" y="756.6" font-family="DejaVu Sans, Liberation Sans, sans-serif" font-weight="bold" font-size="30" fill="#A0A0A0" stroke="#262626" stroke-width="4.4" paint-order="stroke" stroke-linejoin="round">8</text>
<text x="84.0" y="1316.3" font-family="Liberation Sans, DejaVu Sans, sans-serif" font-size="99" fill="#0A0A0A" stroke="#fff" stroke-width="1.3" textLength="56" lengthAdjust="spacingAndGlyphs">A</text>
</g>
<g class="plot">
<rect x="2177.0" y="36" width="3" height="1332" fill="#ECEEF2"/>
<g stroke="#FFD400" stroke-opacity="0.7" stroke-width="3.9"><line x1="2179.0" y1="1342.3" x2="3400.5" y2="1342.3"/><line x1="2179.0" y1="1220.4" x2="3400.5" y2="1220.4"/><line x1="2179.0" y1="1098.5" x2="3400.5" y2="1098.5"/><line x1="2179.0" y1="976.6" x2="3400.5" y2="976.6"/><line x1="2179.0" y1="854.7" x2="3400.5" y2="854.7"/><line x1="2179.0" y1="732.8" x2="3400.5" y2="732.8"/><line x1="2179.0" y1="610.9" x2="3400.5" y2="610.9"/><line x1="2179.0" y1="489.0" x2="3400.5" y2="489.0"/><line x1="2179.0" y1="367.1" x2="3400.5" y2="367.1"/><line x1="2179.0" y1="245.2" x2="3400.5" y2="245.2"/><line x1="2179.0" y1="123.3" x2="3400.5" y2="123.3"/><line x1="2303.2" y1="123.3" x2="2303.2" y2="1342.3"/><line x1="2425.0" y1="123.3" x2="2425.0" y2="1342.3"/><line x1="2546.8" y1="123.3" x2="2546.8" y2="1342.3"/><line x1="2668.5" y1="123.3" x2="2668.5" y2="1342.3"/><line x1="2790.2" y1="123.3" x2="2790.2" y2="1342.3"/><line x1="2912.0" y1="123.3" x2="2912.0" y2="1342.3"/><line x1="3033.8" y1="123.3" x2="3033.8" y2="1342.3"/><line x1="3155.5" y1="123.3" x2="3155.5" y2="1342.3"/><line x1="3277.2" y1="123.3" x2="3277.2" y2="1342.3"/><line x1="3399.0" y1="123.3" x2="3399.0" y2="1342.3"/></g>
<polygon points="2388.5,245.2 2753.7,281.8 2863.3,549.9 2717.2,769.4 2485.9,830.3 2510.2,513.4" fill="#7B68FF"/><polygon points="2485.9,830.3 2717.2,769.4 2863.3,549.9 2960.7,879.1 2692.8,1098.5" fill="#FF9673"/>
<g transform="translate(2388.5 245.2) rotate(18)" stroke="#00F6FF" stroke-width="10.5"><line x1="-10" y1="-10" x2="10" y2="10"/><line x1="-10" y1="10" x2="10" y2="-10"/></g>
<g transform="translate(2692.8 1098.5) rotate(18)" stroke="#00F6FF" stroke-width="10.5"><line x1="-10" y1="-10" x2="10" y2="10"/><line x1="-10" y1="10" x2="10" y2="-10"/></g>
<g transform="translate(2863.3 549.9) rotate(18)" stroke="#00F6FF" stroke-width="10.5"><line x1="-10" y1="-10" x2="10" y2="10"/><line x1="-10" y1="10" x2="10" y2="-10"/></g>
<g transform="translate(2485.9 830.3) rotate(18)" stroke="#00F6FF" stroke-width="10.5"><line x1="-10" y1="-10" x2="10" y2="10"/><line x1="-10" y1="10" x2="10" y2="-10"/></g>
<g transform="translate(2753.7 281.8) rotate(18)" stroke="#00F6FF" stroke-width="10.5"><line x1="-10" y1="-10" x2="10" y2="10"/><line x1="-10" y1="10" x2="10" y2="-10"/></g>
<g transform="translate(2960.7 879.1) rotate(18)" stroke="#00F6FF" stroke-width="10.5"><line x1="-10" y1="-10" x2="10" y2="10"/><line x1="-10" y1="10" x2="10" y2="-10"/></g>
<g transform="translate(2510.2 513.4) rotate(18)" stroke="#00F6FF" stroke-width="10.5"><line x1="-10" y1="-10" x2="10" y2="10"/><line x1="-10" y1="10" x2="10" y2="-10"/></g>
<g transform="translate(2717.2 769.4) rotate(18)" stroke="#00F6FF" stroke-width="10.5"><line x1="-10" y1="-10" x2="10" y2="10"/><line x1="-10" y1="10" x2="10" y2="-10"/></g>
<line x1="2388.5" y1="245.2" x2="2510.2" y2="513.4" stroke="#6557D8" stroke-width="3.3"/><line x1="2485.9" y1="830.3" x2="2510.2" y2="513.4" stroke="#6557D8" stroke-width="3.3"/><line x1="2388.5" y1="245.2" x2="2753.7" y2="281.8" stroke="#6557D8" stroke-width="3.3"/><line x1="2753.7" y1="281.8" x2="2510.2" y2="513.4" stroke="#6557D8" stroke-width="3.3"/><line x1="2485.9" y1="830.3" x2="2717.2" y2="769.4" stroke="#6557D8" stroke-width="3.3"/><line x1="2863.3" y1="549.9" x2="2753.7" y2="281.8" stroke="#6557D8" stroke-width="3.3"/><line x1="2863.3" y1="549.9" x2="2510.2" y2="513.4" stroke="#6557D8" stroke-width="3.3"/><line x1="2863.3" y1="549.9" x2="2717.2" y2="769.4" stroke="#6557D8" stroke-width="3.3"/><line x1="2510.2" y1="513.4" x2="2717.2" y2="769.4" stroke="#6557D8" stroke-width="3.3"/><line x1="2692.8" y1="1098.5" x2="2485.9" y2="830.3" stroke="#FF6A45" stroke-width="3.3"/><line x1="2692.8" y1="1098.5" x2="2717.2" y2="769.4" stroke="#FF6A45" stroke-width="3.3"/><line x1="2692.8" y1="1098.5" x2="2960.7" y2="879.1" stroke="#FF6A45" stroke-width="3.3"/><line x1="2960.7" y1="879.1" x2="2717.2" y2="769.4" stroke="#FF6A45" stroke-width="3.3"/><line x1="2863.3" y1="549.9" x2="2960.7" y2="879.1" stroke="#FF6A45" stroke-width="3.3"/>
<clipPath id="clipB"><polygon points="2388.5,245.2 2753.7,281.8 2863.3,549.9 2960.7,879.1 2692.8,1098.5 2485.9,830.3 2510.2,513.4"/></clipPath>
<g stroke="#FFD400" stroke-opacity="0.56" stroke-width="3.9" clip-path="url(#clipB)"><line x1="2179.0" y1="1342.3" x2="3400.5" y2="1342.3"/><line x1="2179.0" y1="1220.4" x2="3400.5" y2="1220.4"/><line x1="2179.0" y1="1098.5" x2="3400.5" y2="1098.5"/><line x1="2179.0" y1="976.6" x2="3400.5" y2="976.6"/><line x1="2179.0" y1="854.7" x2="3400.5" y2="854.7"/><line x1="2179.0" y1="732.8" x2="3400.5" y2="732.8"/><line x1="2179.0" y1="610.9" x2="3400.5" y2="610.9"/><line x1="2179.0" y1="489.0" x2="3400.5" y2="489.0"/><line x1="2179.0" y1="367.1" x2="3400.5" y2="367.1"/><line x1="2179.0" y1="245.2" x2="3400.5" y2="245.2"/><line x1="2179.0" y1="123.3" x2="3400.5" y2="123.3"/><line x1="2303.2" y1="123.3" x2="2303.2" y2="1342.3"/><line x1="2425.0" y1="123.3" x2="2425.0" y2="1342.3"/><line x1="2546.8" y1="123.3" x2="2546.8" y2="1342.3"/><line x1="2668.5" y1="123.3" x2="2668.5" y2="1342.3"/><line x1="2790.2" y1="123.3" x2="2790.2" y2="1342.3"/><line x1="2912.0" y1="123.3" x2="2912.0" y2="1342.3"/><line x1="3033.8" y1="123.3" x2="3033.8" y2="1342.3"/><line x1="3155.5" y1="123.3" x2="3155.5" y2="1342.3"/><line x1="3277.2" y1="123.3" x2="3277.2" y2="1342.3"/><line x1="3399.0" y1="123.3" x2="3399.0" y2="1342.3"/></g>
<g fill="#FFD94A" font-size="24.6" font-family='Liberation Sans, DejaVu Sans, sans-serif'><text x="2185.0" y="1211.7" textLength="47" lengthAdjust="spacingAndGlyphs">1 cm</text><text x="2185.0" y="1089.8" textLength="47" lengthAdjust="spacingAndGlyphs">2 cm</text><text x="2185.0" y="967.9" textLength="47" lengthAdjust="spacingAndGlyphs">3 cm</text><text x="2185.0" y="846.0" textLength="47" lengthAdjust="spacingAndGlyphs">4 cm</text><text x="2185.0" y="724.1" textLength="47" lengthAdjust="spacingAndGlyphs">5 cm</text><text x="2185.0" y="602.2" textLength="47" lengthAdjust="spacingAndGlyphs">6 cm</text><text x="2185.0" y="480.3" textLength="47" lengthAdjust="spacingAndGlyphs">7 cm</text><text x="2185.0" y="358.4" textLength="47" lengthAdjust="spacingAndGlyphs">8 cm</text><text x="2185.0" y="236.5" textLength="47" lengthAdjust="spacingAndGlyphs">9 cm</text><text x="2185.0" y="114.6" textLength="60" lengthAdjust="spacingAndGlyphs">10 cm</text><text x="2185.0" y="1333.6" textLength="47.5" lengthAdjust="spacingAndGlyphs">0 cm</text><text x="2307.2" y="1333.6" textLength="47.5" lengthAdjust="spacingAndGlyphs">1 cm</text><text x="2429.0" y="1333.6" textLength="47.5" lengthAdjust="spacingAndGlyphs">2 cm</text><text x="2550.8" y="1333.6" textLength="47.5" lengthAdjust="spacingAndGlyphs">3 cm</text><text x="2672.5" y="1333.6" textLength="47.5" lengthAdjust="spacingAndGlyphs">4 cm</text><text x="2794.2" y="1333.6" textLength="47.5" lengthAdjust="spacingAndGlyphs">5 cm</text><text x="2916.0" y="1333.6" textLength="47.5" lengthAdjust="spacingAndGlyphs">6 cm</text><text x="3037.8" y="1333.6" textLength="47.5" lengthAdjust="spacingAndGlyphs">7 cm</text><text x="3159.5" y="1333.6" textLength="47.5" lengthAdjust="spacingAndGlyphs">8 cm</text><text x="3281.2" y="1333.6" textLength="47.5" lengthAdjust="spacingAndGlyphs">9 cm</text></g>
<g fill="none" stroke="#FF0000" stroke-width="2.5">
<path transform="translate(-2.2 0)" d="M2432.0 669.7C2430.9 663.8 2429.9 657.8 2428.7 651.7C2427.5 645.5 2426.3 639.3 2425.0 632.9C2423.7 626.5 2422.4 620.0 2421.1 613.3C2419.8 606.5 2418.6 599.6 2417.4 592.5C2416.2 585.4 2415.1 578.1 2414.0 570.5C2412.8 562.9 2411.8 555.1 2410.5 546.8C2409.2 538.5 2407.9 529.9 2406.3 520.6C2404.6 511.4 2402.7 501.6 2400.7 491.0C2398.6 480.5 2396.2 469.1 2394.1 457.2C2392.0 445.3 2389.6 432.4 2388.3 419.4C2386.9 406.4 2385.6 392.5 2385.8 379.2C2386.0 366.0 2386.9 352.2 2389.5 339.7C2392.0 327.2 2395.9 315.0 2401.1 304.3C2406.4 293.7 2413.2 284.0 2420.9 275.8C2428.7 267.7 2437.9 261.0 2447.5 255.6C2457.1 250.1 2467.8 246.2 2478.5 243.0C2489.2 239.8 2500.5 238.0 2511.6 236.4C2522.7 234.9 2534.0 234.3 2545.0 233.8C2556.1 233.3 2567.1 233.4 2578.0 233.6C2588.8 233.9 2599.5 234.5 2610.1 235.3C2620.7 236.1 2631.1 237.2 2641.4 238.6C2651.7 240.0 2661.8 241.8 2671.8 243.7C2681.8 245.7 2691.7 247.9 2701.4 250.4C2711.1 252.8 2720.6 255.5 2730.0 258.4C2739.3 261.3 2748.6 264.3 2757.6 267.7C2766.7 271.1 2775.6 274.7 2784.2 278.9C2792.8 283.0 2801.3 287.5 2809.3 292.7C2817.3 297.8 2825.0 303.6 2832.2 309.9C2839.3 316.2 2846.0 323.3 2852.2 330.7C2858.3 338.0 2863.8 346.1 2868.9 354.2C2874.0 362.3 2878.5 370.9 2882.7 379.3C2886.9 387.6 2890.6 396.1 2894.2 404.3C2897.8 412.4 2901.0 420.5 2904.2 428.3C2907.4 436.0 2910.5 443.5 2913.4 450.9C2916.4 458.3 2919.2 465.4 2921.9 472.4C2924.6 479.5 2927.2 486.4 2929.6 493.3C2932.0 500.2 2934.2 507.1 2936.3 513.8C2938.3 520.6 2940.2 527.4 2942.0 534.0C2943.8 540.7 2945.5 547.3 2947.2 553.8C2948.9 560.3 2950.5 566.7 2952.2 573.1C2953.9 579.5 2955.6 585.8 2957.3 592.2C2959.0 598.5 2960.7 604.8 2962.4 611.1C2964.1 617.5 2965.7 623.8 2967.3 630.3C2968.9 636.7 2970.5 643.2 2972.0 649.8C2973.5 656.3 2974.9 663.0 2976.3 669.7C2977.7 676.5 2979.2 683.3 2980.5 690.2C2981.8 697.2 2983.1 704.3 2984.3 711.5C2985.4 718.7 2986.5 726.1 2987.1 733.5C2987.8 741.0 2988.3 748.6 2988.3 756.2C2988.3 763.7 2987.9 771.4 2987.1 779.0C2986.3 786.6 2985.0 794.2 2983.5 801.8C2982.0 809.4 2980.0 816.9 2978.0 824.5C2975.9 832.1 2973.6 839.7 2971.4 847.6C2969.2 855.4 2967.0 863.4 2964.7 871.6C2962.5 879.9 2960.3 888.4 2957.9 897.2C2955.4 905.9 2953.1 915.0 2950.1 924.0C2947.2 933.0 2944.1 942.3 2940.2 951.2C2936.4 960.1 2932.1 969.0 2927.2 977.4C2922.3 985.8 2916.7 993.9 2910.7 1001.6C2904.6 1009.2 2897.9 1016.4 2890.9 1023.2C2883.9 1030.1 2876.4 1036.4 2868.7 1042.6C2861.0 1048.8 2852.9 1054.7 2844.6 1060.4C2836.4 1066.1 2827.9 1071.7 2819.1 1076.9C2810.3 1082.0 2801.2 1087.0 2791.8 1091.2C2782.5 1095.4 2772.8 1099.3 2763.0 1102.0C2753.1 1104.7 2742.9 1106.7 2732.7 1107.5C2722.6 1108.2 2712.1 1107.8 2702.0 1106.3C2691.8 1104.8 2681.6 1101.9 2671.7 1098.2C2661.9 1094.5 2652.3 1089.5 2643.2 1084.0C2634.0 1078.5 2625.2 1072.0 2616.9 1065.2C2608.7 1058.5 2600.8 1051.0 2593.5 1043.4C2586.1 1035.9 2579.3 1027.9 2572.8 1020.0C2566.4 1012.1 2560.5 1004.0 2554.9 995.9C2549.3 987.9 2544.2 979.7 2539.3 971.8C2534.5 963.8 2530.1 955.8 2526.0 948.1C2521.8 940.3 2518.0 932.6 2514.3 925.2C2510.7 917.7 2507.3 910.5 2504.1 903.4C2500.9 896.3 2497.8 889.4 2495.0 882.6C2492.1 875.8 2489.4 869.2 2486.8 862.7C2484.2 856.2 2481.8 849.8 2479.6 843.5C2477.3 837.1 2475.3 830.9 2473.3 824.7C2471.3 818.6 2469.5 812.5 2467.7 806.5C2465.9 800.5 2464.2 794.7 2462.5 788.9C2460.7 783.1 2459.0 777.5 2457.3 771.8C2455.5 766.2 2453.8 760.7 2452.0 755.1C2450.3 749.5 2448.5 744.0 2446.9 738.5C2445.2 732.9 2443.6 727.3 2442.2 721.7C2440.8 716.0 2439.5 710.3 2438.3 704.6C2437.1 698.9 2436.1 693.1 2435.0 687.3C2434.0 681.5 2433.0 675.6 2432.0 669.7Z"/>
<path transform="translate(2.2 0)" d="M2432.0 669.7C2430.9 663.8 2429.9 657.8 2428.7 651.7C2427.5 645.5 2426.3 639.3 2425.0 632.9C2423.7 626.5 2422.4 620.0 2421.1 613.3C2419.8 606.5 2418.6 599.6 2417.4 592.5C2416.2 585.4 2415.1 578.1 2414.0 570.5C2412.8 562.9 2411.8 555.1 2410.5 546.8C2409.2 538.5 2407.9 529.9 2406.3 520.6C2404.6 511.4 2402.7 501.6 2400.7 491.0C2398.6 480.5 2396.2 469.1 2394.1 457.2C2392.0 445.3 2389.6 432.4 2388.3 419.4C2386.9 406.4 2385.6 392.5 2385.8 379.2C2386.0 366.0 2386.9 352.2 2389.5 339.7C2392.0 327.2 2395.9 315.0 2401.1 304.3C2406.4 293.7 2413.2 284.0 2420.9 275.8C2428.7 267.7 2437.9 261.0 2447.5 255.6C2457.1 250.1 2467.8 246.2 2478.5 243.0C2489.2 239.8 2500.5 238.0 2511.6 236.4C2522.7 234.9 2534.0 234.3 2545.0 233.8C2556.1 233.3 2567.1 233.4 2578.0 233.6C2588.8 233.9 2599.5 234.5 2610.1 235.3C2620.7 236.1 2631.1 237.2 2641.4 238.6C2651.7 240.0 2661.8 241.8 2671.8 243.7C2681.8 245.7 2691.7 247.9 2701.4 250.4C2711.1 252.8 2720.6 255.5 2730.0 258.4C2739.3 261.3 2748.6 264.3 2757.6 267.7C2766.7 271.1 2775.6 274.7 2784.2 278.9C2792.8 283.0 2801.3 287.5 2809.3 292.7C2817.3 297.8 2825.0 303.6 2832.2 309.9C2839.3 316.2 2846.0 323.3 2852.2 330.7C2858.3 338.0 2863.8 346.1 2868.9 354.2C2874.0 362.3 2878.5 370.9 2882.7 379.3C2886.9 387.6 2890.6 396.1 2894.2 404.3C2897.8 412.4 2901.0 420.5 2904.2 428.3C2907.4 436.0 2910.5 443.5 2913.4 450.9C2916.4 458.3 2919.2 465.4 2921.9 472.4C2924.6 479.5 2927.2 486.4 2929.6 493.3C2932.0 500.2 2934.2 507.1 2936.3 513.8C2938.3 520.6 2940.2 527.4 2942.0 534.0C2943.8 540.7 2945.5 547.3 2947.2 553.8C2948.9 560.3 2950.5 566.7 2952.2 573.1C2953.9 579.5 2955.6 585.8 2957.3 592.2C2959.0 598.5 2960.7 604.8 2962.4 611.1C2964.1 617.5 2965.7 623.8 2967.3 630.3C2968.9 636.7 2970.5 643.2 2972.0 649.8C2973.5 656.3 2974.9 663.0 2976.3 669.7C2977.7 676.5 2979.2 683.3 2980.5 690.2C2981.8 697.2 2983.1 704.3 2984.3 711.5C2985.4 718.7 2986.5 726.1 2987.1 733.5C2987.8 741.0 2988.3 748.6 2988.3 756.2C2988.3 763.7 2987.9 771.4 2987.1 779.0C2986.3 786.6 2985.0 794.2 2983.5 801.8C2982.0 809.4 2980.0 816.9 2978.0 824.5C2975.9 832.1 2973.6 839.7 2971.4 847.6C2969.2 855.4 2967.0 863.4 2964.7 871.6C2962.5 879.9 2960.3 888.4 2957.9 897.2C2955.4 905.9 2953.1 915.0 2950.1 924.0C2947.2 933.0 2944.1 942.3 2940.2 951.2C2936.4 960.1 2932.1 969.0 2927.2 977.4C2922.3 985.8 2916.7 993.9 2910.7 1001.6C2904.6 1009.2 2897.9 1016.4 2890.9 1023.2C2883.9 1030.1 2876.4 1036.4 2868.7 1042.6C2861.0 1048.8 2852.9 1054.7 2844.6 1060.4C2836.4 1066.1 2827.9 1071.7 2819.1 1076.9C2810.3 1082.0 2801.2 1087.0 2791.8 1091.2C2782.5 1095.4 2772.8 1099.3 2763.0 1102.0C2753.1 1104.7 2742.9 1106.7 2732.7 1107.5C2722.6 1108.2 2712.1 1107.8 2702.0 1106.3C2691.8 1104.8 2681.6 1101.9 2671.7 1098.2C2661.9 1094.5 2652.3 1089.5 2643.2 1084.0C2634.0 1078.5 2625.2 1072.0 2616.9 1065.2C2608.7 1058.5 2600.8 1051.0 2593.5 1043.4C2586.1 1035.9 2579.3 1027.9 2572.8 1020.0C2566.4 1012.1 2560.5 1004.0 2554.9 995.9C2549.3 987.9 2544.2 979.7 2539.3 971.8C2534.5 963.8 2530.1 955.8 2526.0 948.1C2521.8 940.3 2518.0 932.6 2514.3 925.2C2510.7 917.7 2507.3 910.5 2504.1 903.4C2500.9 896.3 2497.8 889.4 2495.0 882.6C2492.1 875.8 2489.4 869.2 2486.8 862.7C2484.2 856.2 2481.8 849.8 2479.6 843.5C2477.3 837.1 2475.3 830.9 2473.3 824.7C2471.3 818.6 2469.5 812.5 2467.7 806.5C2465.9 800.5 2464.2 794.7 2462.5 788.9C2460.7 783.1 2459.0 777.5 2457.3 771.8C2455.5 766.2 2453.8 760.7 2452.0 755.1C2450.3 749.5 2448.5 744.0 2446.9 738.5C2445.2 732.9 2443.6 727.3 2442.2 721.7C2440.8 716.0 2439.5 710.3 2438.3 704.6C2437.1 698.9 2436.1 693.1 2435.0 687.3C2434.0 681.5 2433.0 675.6 2432.0 669.7Z"/>
<path transform="translate(0 -2.2)" d="M2432.0 669.7C2430.9 663.8 2429.9 657.8 2428.7 651.7C2427.5 645.5 2426.3 639.3 2425.0 632.9C2423.7 626.5 2422.4 620.0 2421.1 613.3C2419.8 606.5 2418.6 599.6 2417.4 592.5C2416.2 585.4 2415.1 578.1 2414.0 570.5C2412.8 562.9 2411.8 555.1 2410.5 546.8C2409.2 538.5 2407.9 529.9 2406.3 520.6C2404.6 511.4 2402.7 501.6 2400.7 491.0C2398.6 480.5 2396.2 469.1 2394.1 457.2C2392.0 445.3 2389.6 432.4 2388.3 419.4C2386.9 406.4 2385.6 392.5 2385.8 379.2C2386.0 366.0 2386.9 352.2 2389.5 339.7C2392.0 327.2 2395.9 315.0 2401.1 304.3C2406.4 293.7 2413.2 284.0 2420.9 275.8C2428.7 267.7 2437.9 261.0 2447.5 255.6C2457.1 250.1 2467.8 246.2 2478.5 243.0C2489.2 239.8 2500.5 238.0 2511.6 236.4C2522.7 234.9 2534.0 234.3 2545.0 233.8C2556.1 233.3 2567.1 233.4 2578.0 233.6C2588.8 233.9 2599.5 234.5 2610.1 235.3C2620.7 236.1 2631.1 237.2 2641.4 238.6C2651.7 240.0 2661.8 241.8 2671.8 243.7C2681.8 245.7 2691.7 247.9 2701.4 250.4C2711.1 252.8 2720.6 255.5 2730.0 258.4C2739.3 261.3 2748.6 264.3 2757.6 267.7C2766.7 271.1 2775.6 274.7 2784.2 278.9C2792.8 283.0 2801.3 287.5 2809.3 292.7C2817.3 297.8 2825.0 303.6 2832.2 309.9C2839.3 316.2 2846.0 323.3 2852.2 330.7C2858.3 338.0 2863.8 346.1 2868.9 354.2C2874.0 362.3 2878.5 370.9 2882.7 379.3C2886.9 387.6 2890.6 396.1 2894.2 404.3C2897.8 412.4 2901.0 420.5 2904.2 428.3C2907.4 436.0 2910.5 443.5 2913.4 450.9C2916.4 458.3 2919.2 465.4 2921.9 472.4C2924.6 479.5 2927.2 486.4 2929.6 493.3C2932.0 500.2 2934.2 507.1 2936.3 513.8C2938.3 520.6 2940.2 527.4 2942.0 534.0C2943.8 540.7 2945.5 547.3 2947.2 553.8C2948.9 560.3 2950.5 566.7 2952.2 573.1C2953.9 579.5 2955.6 585.8 2957.3 592.2C2959.0 598.5 2960.7 604.8 2962.4 611.1C2964.1 617.5 2965.7 623.8 2967.3 630.3C2968.9 636.7 2970.5 643.2 2972.0 649.8C2973.5 656.3 2974.9 663.0 2976.3 669.7C2977.7 676.5 2979.2 683.3 2980.5 690.2C2981.8 697.2 2983.1 704.3 2984.3 711.5C2985.4 718.7 2986.5 726.1 2987.1 733.5C2987.8 741.0 2988.3 748.6 2988.3 756.2C2988.3 763.7 2987.9 771.4 2987.1 779.0C2986.3 786.6 2985.0 794.2 2983.5 801.8C2982.0 809.4 2980.0 816.9 2978.0 824.5C2975.9 832.1 2973.6 839.7 2971.4 847.6C2969.2 855.4 2967.0 863.4 2964.7 871.6C2962.5 879.9 2960.3 888.4 2957.9 897.2C2955.4 905.9 2953.1 915.0 2950.1 924.0C2947.2 933.0 2944.1 942.3 2940.2 951.2C2936.4 960.1 2932.1 969.0 2927.2 977.4C2922.3 985.8 2916.7 993.9 2910.7 1001.6C2904.6 1009.2 2897.9 1016.4 2890.9 1023.2C2883.9 1030.1 2876.4 1036.4 2868.7 1042.6C2861.0 1048.8 2852.9 1054.7 2844.6 1060.4C2836.4 1066.1 2827.9 1071.7 2819.1 1076.9C2810.3 1082.0 2801.2 1087.0 2791.8 1091.2C2782.5 1095.4 2772.8 1099.3 2763.0 1102.0C2753.1 1104.7 2742.9 1106.7 2732.7 1107.5C2722.6 1108.2 2712.1 1107.8 2702.0 1106.3C2691.8 1104.8 2681.6 1101.9 2671.7 1098.2C2661.9 1094.5 2652.3 1089.5 2643.2 1084.0C2634.0 1078.5 2625.2 1072.0 2616.9 1065.2C2608.7 1058.5 2600.8 1051.0 2593.5 1043.4C2586.1 1035.9 2579.3 1027.9 2572.8 1020.0C2566.4 1012.1 2560.5 1004.0 2554.9 995.9C2549.3 987.9 2544.2 979.7 2539.3 971.8C2534.5 963.8 2530.1 955.8 2526.0 948.1C2521.8 940.3 2518.0 932.6 2514.3 925.2C2510.7 917.7 2507.3 910.5 2504.1 903.4C2500.9 896.3 2497.8 889.4 2495.0 882.6C2492.1 875.8 2489.4 869.2 2486.8 862.7C2484.2 856.2 2481.8 849.8 2479.6 843.5C2477.3 837.1 2475.3 830.9 2473.3 824.7C2471.3 818.6 2469.5 812.5 2467.7 806.5C2465.9 800.5 2464.2 794.7 2462.5 788.9C2460.7 783.1 2459.0 777.5 2457.3 771.8C2455.5 766.2 2453.8 760.7 2452.0 755.1C2450.3 749.5 2448.5 744.0 2446.9 738.5C2445.2 732.9 2443.6 727.3 2442.2 721.7C2440.8 716.0 2439.5 710.3 2438.3 704.6C2437.1 698.9 2436.1 693.1 2435.0 687.3C2434.0 681.5 2433.0 675.6 2432.0 669.7Z"/>
<path transform="translate(0 2.2)" d="M2432.0 669.7C2430.9 663.8 2429.9 657.8 2428.7 651.7C2427.5 645.5 2426.3 639.3 2425.0 632.9C2423.7 626.5 2422.4 620.0 2421.1 613.3C2419.8 606.5 2418.6 599.6 2417.4 592.5C2416.2 585.4 2415.1 578.1 2414.0 570.5C2412.8 562.9 2411.8 555.1 2410.5 546.8C2409.2 538.5 2407.9 529.9 2406.3 520.6C2404.6 511.4 2402.7 501.6 2400.7 491.0C2398.6 480.5 2396.2 469.1 2394.1 457.2C2392.0 445.3 2389.6 432.4 2388.3 419.4C2386.9 406.4 2385.6 392.5 2385.8 379.2C2386.0 366.0 2386.9 352.2 2389.5 339.7C2392.0 327.2 2395.9 315.0 2401.1 304.3C2406.4 293.7 2413.2 284.0 2420.9 275.8C2428.7 267.7 2437.9 261.0 2447.5 255.6C2457.1 250.1 2467.8 246.2 2478.5 243.0C2489.2 239.8 2500.5 238.0 2511.6 236.4C2522.7 234.9 2534.0 234.3 2545.0 233.8C2556.1 233.3 2567.1 233.4 2578.0 233.6C2588.8 233.9 2599.5 234.5 2610.1 235.3C2620.7 236.1 2631.1 237.2 2641.4 238.6C2651.7 240.0 2661.8 241.8 2671.8 243.7C2681.8 245.7 2691.7 247.9 2701.4 250.4C2711.1 252.8 2720.6 255.5 2730.0 258.4C2739.3 261.3 2748.6 264.3 2757.6 267.7C2766.7 271.1 2775.6 274.7 2784.2 278.9C2792.8 283.0 2801.3 287.5 2809.3 292.7C2817.3 297.8 2825.0 303.6 2832.2 309.9C2839.3 316.2 2846.0 323.3 2852.2 330.7C2858.3 338.0 2863.8 346.1 2868.9 354.2C2874.0 362.3 2878.5 370.9 2882.7 379.3C2886.9 387.6 2890.6 396.1 2894.2 404.3C2897.8 412.4 2901.0 420.5 2904.2 428.3C2907.4 436.0 2910.5 443.5 2913.4 450.9C2916.4 458.3 2919.2 465.4 2921.9 472.4C2924.6 479.5 2927.2 486.4 2929.6 493.3C2932.0 500.2 2934.2 507.1 2936.3 513.8C2938.3 520.6 2940.2 527.4 2942.0 534.0C2943.8 540.7 2945.5 547.3 2947.2 553.8C2948.9 560.3 2950.5 566.7 2952.2 573.1C2953.9 579.5 2955.6 585.8 2957.3 592.2C2959.0 598.5 2960.7 604.8 2962.4 611.1C2964.1 617.5 2965.7 623.8 2967.3 630.3C2968.9 636.7 2970.5 643.2 2972.0 649.8C2973.5 656.3 2974.9 663.0 2976.3 669.7C2977.7 676.5 2979.2 683.3 2980.5 690.2C2981.8 697.2 2983.1 704.3 2984.3 711.5C2985.4 718.7 2986.5 726.1 2987.1 733.5C2987.8 741.0 2988.3 748.6 2988.3 756.2C2988.3 763.7 2987.9 771.4 2987.1 779.0C2986.3 786.6 2985.0 794.2 2983.5 801.8C2982.0 809.4 2980.0 816.9 2978.0 824.5C2975.9 832.1 2973.6 839.7 2971.4 847.6C2969.2 855.4 2967.0 863.4 2964.7 871.6C2962.5 879.9 2960.3 888.4 2957.9 897.2C2955.4 905.9 2953.1 915.0 2950.1 924.0C2947.2 933.0 2944.1 942.3 2940.2 951.2C2936.4 960.1 2932.1 969.0 2927.2 977.4C2922.3 985.8 2916.7 993.9 2910.7 1001.6C2904.6 1009.2 2897.9 1016.4 2890.9 1023.2C2883.9 1030.1 2876.4 1036.4 2868.7 1042.6C2861.0 1048.8 2852.9 1054.7 2844.6 1060.4C2836.4 1066.1 2827.9 1071.7 2819.1 1076.9C2810.3 1082.0 2801.2 1087.0 2791.8 1091.2C2782.5 1095.4 2772.8 1099.3 2763.0 1102.0C2753.1 1104.7 2742.9 1106.7 2732.7 1107.5C2722.6 1108.2 2712.1 1107.8 2702.0 1106.3C2691.8 1104.8 2681.6 1101.9 2671.7 1098.2C2661.9 1094.5 2652.3 1089.5 2643.2 1084.0C2634.0 1078.5 2625.2 1072.0 2616.9 1065.2C2608.7 1058.5 2600.8 1051.0 2593.5 1043.4C2586.1 1035.9 2579.3 1027.9 2572.8 1020.0C2566.4 1012.1 2560.5 1004.0 2554.9 995.9C2549.3 987.9 2544.2 979.7 2539.3 971.8C2534.5 963.8 2530.1 955.8 2526.0 948.1C2521.8 940.3 2518.0 932.6 2514.3 925.2C2510.7 917.7 2507.3 910.5 2504.1 903.4C2500.9 896.3 2497.8 889.4 2495.0 882.6C2492.1 875.8 2489.4 869.2 2486.8 862.7C2484.2 856.2 2481.8 849.8 2479.6 843.5C2477.3 837.1 2475.3 830.9 2473.3 824.7C2471.3 818.6 2469.5 812.5 2467.7 806.5C2465.9 800.5 2464.2 794.7 2462.5 788.9C2460.7 783.1 2459.0 777.5 2457.3 771.8C2455.5 766.2 2453.8 760.7 2452.0 755.1C2450.3 749.5 2448.5 744.0 2446.9 738.5C2445.2 732.9 2443.6 727.3 2442.2 721.7C2440.8 716.0 2439.5 710.3 2438.3 704.6C2437.1 698.9 2436.1 693.1 2435.0 687.3C2434.0 681.5 2433.0 675.6 2432.0 669.7Z"/>
</g>
<path fill="none" stroke="#FF0808" stroke-width="4.5" stroke-dasharray="9.6 14.8" d="M2370.0 669.7C2368.4 662.3 2366.8 654.9 2365.2 647.2C2363.6 639.6 2361.9 631.8 2360.3 623.9C2358.7 615.9 2357.1 607.7 2355.4 599.3C2353.8 590.9 2352.2 582.3 2350.5 573.3C2348.8 564.4 2347.2 555.2 2345.4 545.5C2343.6 535.9 2341.8 525.9 2339.9 515.4C2338.1 504.8 2336.1 493.9 2334.3 482.4C2332.5 470.9 2330.6 458.9 2329.2 446.4C2327.8 433.9 2326.4 420.9 2325.9 407.6C2325.3 394.4 2325.1 380.6 2325.9 367.1C2326.8 353.5 2328.3 339.6 2331.0 326.4C2333.8 313.1 2337.5 299.8 2342.5 287.6C2347.5 275.4 2353.7 263.5 2361.0 253.0C2368.3 242.4 2376.8 232.7 2386.1 224.2C2395.4 215.8 2405.9 208.5 2416.8 202.3C2427.6 196.2 2439.4 191.3 2451.3 187.3C2463.2 183.3 2475.7 180.5 2488.1 178.3C2500.5 176.1 2513.2 175.0 2525.6 174.2C2538.1 173.4 2550.6 173.4 2563.0 173.5C2575.3 173.7 2587.5 174.3 2599.5 175.1C2611.5 175.9 2623.3 177.1 2635.1 178.4C2646.8 179.7 2658.3 181.2 2669.7 182.9C2681.1 184.7 2692.4 186.6 2703.5 188.8C2714.6 191.1 2725.7 193.5 2736.5 196.4C2747.3 199.3 2758.0 202.4 2768.5 206.0C2779.0 209.7 2789.3 213.6 2799.4 218.1C2809.4 222.6 2819.2 227.6 2828.6 233.1C2838.1 238.6 2847.2 244.6 2855.9 251.1C2864.6 257.6 2872.9 264.7 2880.6 272.3C2888.4 279.8 2895.7 287.9 2902.4 296.2C2909.2 304.6 2915.3 313.5 2921.1 322.4C2926.8 331.4 2931.9 340.7 2936.7 349.9C2941.4 359.1 2945.7 368.5 2949.7 377.7C2953.8 386.9 2957.4 396.1 2960.9 405.1C2964.4 414.0 2967.6 422.8 2970.8 431.4C2974.0 440.0 2977.1 448.4 2980.1 456.7C2983.1 464.9 2986.0 473.0 2988.8 481.0C2991.7 489.0 2994.4 496.9 2997.0 504.8C2999.7 512.7 3002.2 520.5 3004.5 528.3C3006.8 536.1 3009.0 543.9 3011.1 551.7C3013.1 559.5 3015.0 567.3 3016.8 575.1C3018.7 582.9 3020.4 590.6 3022.2 598.4C3023.9 606.2 3025.6 614.0 3027.4 621.8C3029.2 629.7 3031.0 637.5 3032.8 645.5C3034.6 653.5 3036.5 661.5 3038.2 669.7C3039.9 677.9 3041.7 686.2 3043.2 694.6C3044.6 703.1 3046.0 711.6 3046.9 720.3C3047.8 729.0 3048.4 737.8 3048.6 746.6C3048.8 755.4 3048.6 764.4 3048.0 773.3C3047.5 782.2 3046.4 791.1 3045.1 800.1C3043.8 809.1 3042.1 818.0 3040.2 827.0C3038.4 836.1 3036.2 845.1 3033.9 854.3C3031.7 863.4 3029.2 872.6 3026.6 882.0C3024.0 891.4 3021.3 900.9 3018.3 910.5C3015.3 920.1 3012.2 929.9 3008.6 939.7C3005.0 949.4 3001.2 959.3 2996.8 969.0C2992.4 978.7 2987.6 988.4 2982.3 997.8C2976.9 1007.2 2971.1 1016.5 2964.7 1025.4C2958.3 1034.2 2951.4 1042.8 2944.1 1051.1C2936.7 1059.3 2928.9 1067.2 2920.7 1074.8C2912.5 1082.3 2903.9 1089.6 2894.9 1096.5C2886.0 1103.4 2876.8 1110.0 2867.2 1116.3C2857.7 1122.6 2847.8 1128.6 2837.7 1134.1C2827.5 1139.6 2817.1 1144.9 2806.3 1149.3C2795.6 1153.8 2784.6 1157.8 2773.4 1160.8C2762.1 1163.9 2750.6 1166.2 2739.0 1167.4C2727.5 1168.6 2715.7 1168.8 2704.1 1167.9C2692.5 1167.0 2680.8 1164.9 2669.5 1161.8C2658.2 1158.7 2647.0 1154.4 2636.3 1149.3C2625.6 1144.2 2615.2 1138.0 2605.3 1131.3C2595.4 1124.7 2586.0 1117.1 2577.0 1109.4C2568.1 1101.7 2559.7 1093.3 2551.7 1085.0C2543.8 1076.7 2536.3 1068.0 2529.2 1059.4C2522.1 1050.9 2515.5 1042.2 2509.2 1033.6C2502.9 1025.0 2497.0 1016.4 2491.4 1007.8C2485.8 999.3 2480.6 990.8 2475.7 982.4C2470.8 974.0 2466.2 965.7 2461.9 957.4C2457.5 949.1 2453.5 940.9 2449.7 932.8C2445.9 924.7 2442.4 916.7 2439.0 908.8C2435.7 900.9 2432.5 893.1 2429.5 885.4C2426.5 877.8 2423.6 870.2 2420.9 862.8C2418.1 855.3 2415.5 848.0 2413.0 840.7C2410.4 833.4 2408.0 826.2 2405.7 819.1C2403.4 811.9 2401.2 804.8 2399.1 797.7C2397.1 790.6 2395.1 783.5 2393.3 776.5C2391.5 769.4 2389.8 762.3 2388.2 755.3C2386.5 748.2 2385.0 741.2 2383.5 734.1C2382.0 727.1 2380.5 720.0 2379.1 712.9C2377.6 705.8 2376.1 698.7 2374.6 691.5C2373.1 684.3 2371.5 677.1 2370.0 669.7Z"/>
<g stroke="#FFFFFF" stroke-opacity="0.72" stroke-width="3.2"><line x1="2402.7" y1="243.5" x2="2740.1" y2="277.3"/><line x1="2761.9" y1="293.6" x2="2860.9" y2="535.8"/><line x1="2483.9" y1="816.1" x2="2506.1" y2="527.1"/><line x1="2501.6" y1="501.9" x2="2391.4" y2="259.2"/><line x1="2870.2" y1="562.5" x2="2959.7" y2="864.8"/><line x1="2951.8" y1="890.3" x2="2705.6" y2="1092.0"/><line x1="2681.8" y1="1089.3" x2="2492.0" y2="843.3"/></g>
<text x="2391.1" y="229.6" font-family="DejaVu Sans, Liberation Sans, sans-serif" font-weight="bold" font-size="30" fill="#A0A0A0" stroke="#262626" stroke-width="4.4" paint-order="stroke" stroke-linejoin="round">1</text>
<text x="2695.4" y="1082.9" font-family="DejaVu Sans, Liberation Sans, sans-serif" font-weight="bold" font-size="30" fill="#A0A0A0" stroke="#262626" stroke-width="4.4" paint-order="stroke" stroke-linejoin="round">2</text>
<text x="2865.9" y="534.3" font-family="DejaVu Sans, Liberation Sans, sans-serif" font-weight="bold" font-size="30" fill="#A0A0A0" stroke="#262626" stroke-width="4.4" paint-order="stroke" stroke-linejoin="round">3</text>
<text x="2488.5" y="814.7" font-family="DejaVu Sans, Liberation Sans, sans-serif" font-weight="bold" font-size="30" fill="#A0A0A0" stroke="#262626" stroke-width="4.4" paint-order="stroke" stroke-linejoin="round">4</text>
<text x="2756.3" y="266.2" font-family="DejaVu Sans, Liberation Sans, sans-serif" font-weight="bold" font-size="30" fill="#A0A0A0" stroke="#262626" stroke-width="4.4" paint-order="stroke" stroke-linejoin="round">5</text>
<text x="2963.3" y="863.5" font-family="DejaVu Sans, Liberation Sans, sans-serif" font-weight="bold" font-size="30" fill="#A0A0A0" stroke="#262626" stroke-width="4.4" paint-order="stroke" stroke-linejoin="round">6</text>
<text x="2512.8" y="497.8" font-family="DejaVu Sans, Liberation Sans, sans-serif" font-weight="bold" font-size="30" fill="#A0A0A0" stroke="#262626" stroke-width="4.4" paint-order="stroke" stroke-linejoin="round">7</text>
<text x="2719.8" y="753.8" font-family="DejaVu Sans, Liberation Sans, sans-serif" font-weight="bold" font-size="30" fill="#A0A0A0" stroke="#262626" stroke-width="4.4" paint-order="stroke" stroke-linejoin="round">8</text>
<text x="2205.0" y="1316.3" font-family="Liberation Sans, DejaVu Sans, sans-serif" font-size="99" fill="#0A0A0A" stroke="#fff" stroke-width="1.3" textLength="56" lengthAdjust="spacingAndGlyphs">B</text>
</g>
</svg>
<section class="seq" style="left:1260.5px;top:36px;width:889.6px;height:1332px">
<h2 class="t" style="left:12px;top:6.8px;font-size:42px;line-height:42px;letter-spacing:-1.9px;color:#3E3E4A">Sequences</h2>
<div style="left:12.5px;top:69.0px;width:877.1px;height:1263.0px;background:#fff"></div>
<div style="left:12.5px;top:66.0px;width:877.1px;height:62.0px;background:linear-gradient(#B6B6DC 0,#B6B6DC 2.6px,#5858B2 2.8px,#5858B2 6px,#F0F0F6 6.4px,#E6E6F0 40%,#C4C3DA 72%,#ACABC9 100%)"></div>
<div style="left:12.5px;top:124.0px;width:877.1px;height:4.7px;background:#5C52A6"></div>
<div style="left:12.5px;top:128.7px;width:877.1px;height:4.0px;background:#FFC67C"></div>
<div style="left:12.5px;top:132.6px;width:877.1px;height:2.4px;background:#ABA391"></div>
<div style="left:18.2px;top:75.0px;width:229.2px;height:57.6px;background:linear-gradient(#FF8E4E,#FFA468 45%,#FFC988 85%,#FFD494);border:3.2px solid #4444A4;border-bottom:none;box-sizing:border-box;border-radius:2px 2px 0 0"></div>
<div style="left:468.2px;top:80.0px;width:2.2px;height:42.0px;background:#EDEDF5"></div>
<div style="left:470.2px;top:80.0px;width:1.6px;height:42.0px;background:#8A8AB0"></div>
<span class="t b dj" style="left:32.3px;top:91.9px;font-size:27.7px;line-height:27.7px;color:#14141C;">Subdomain 1</span>
<span class="t b dj" style="left:258.6px;top:91.9px;font-size:27.7px;line-height:27.7px;color:#14141C;">Subdomain 2</span>
<div style="left:15.5px;top:135.0px;width:871.1px;height:80.0px;background:#E6E7EF"></div>
<div style="left:24.3px;top:158.0px;width:81.5px;height:41.5px;background:#6A5ACD;border:2.6px solid #7E7E8A;box-sizing:border-box"></div>
<span class="t " style="left:119.5px;top:167.4px;font-size:26.0px;line-height:26.0px;color:#3A3A46;">Subdomain 1</span>
<div style="left:15.5px;top:213.4px;width:871.1px;height:5.0px;background:#7E7E82"></div>
<div style="left:17.0px;top:218.2px;width:867.5px;height:51.0px;background:linear-gradient(#F6F6F8,#F1F1F4)"></div>
<span class="t " style="left:23.5px;top:228.3px;font-size:27.1px;line-height:27.1px;color:#30303E;">Probe +</span>
<span class="t " style="left:182.7px;top:228.3px;font-size:27.1px;line-height:27.1px;color:#30303E;">Probe -</span>
<span class="t " style="left:332.5px;top:228.3px;font-size:27.1px;line-height:27.1px;color:#30303E;">Voltage</span>
<span class="t " style="left:485.5px;top:228.3px;font-size:27.1px;line-height:27.1px;color:#30303E;">Distance (cm)</span>
<span class="t " style="left:720.0px;top:228.3px;font-size:27.1px;line-height:27.1px;color:#30303E;">Volts/cm</span>
<div style="left:17.0px;top:269.2px;width:867.5px;height:47.1px;background:#EEEFF1"></div>
<span class="t " style="right:720.2px;top:279.2px;font-size:26.6px;line-height:26.6px;color:#30303E;">1</span>
<span class="t " style="right:570.4px;top:279.2px;font-size:26.6px;line-height:26.6px;color:#30303E;">7</span>
<span class="t " style="right:417.4px;top:279.2px;font-size:26.6px;line-height:26.6px;color:#30303E;">2,400</span>
<span class="t " style="right:182.9px;top:279.2px;font-size:26.6px;line-height:26.6px;color:#30303E;">2.4</span>
<span class="t " style="right:11.9px;top:279.2px;font-size:26.6px;line-height:26.6px;color:#30303E;">1,000</span>
<span class="t " style="right:720.2px;top:326.3px;font-size:26.6px;line-height:26.6px;color:#30303E;">4</span>
<span class="t " style="right:570.4px;top:326.3px;font-size:26.6px;line-height:26.6px;color:#30303E;">7</span>
<span class="t " style="right:417.4px;top:326.3px;font-size:26.6px;line-height:26.6px;color:#30303E;">2,600</span>
<span class="t " style="right:182.9px;top:326.3px;font-size:26.6px;line-height:26.6px;color:#30303E;">2.6</span>
<span class="t " style="right:11.9px;top:326.3px;font-size:26.6px;line-height:26.6px;color:#30303E;">1,000</span>
<span class="t " style="right:720.2px;top:373.4px;font-size:26.6px;line-height:26.6px;color:#30303E;">1</span>
<span class="t " style="right:570.4px;top:373.4px;font-size:26.6px;line-height:26.6px;color:#30303E;">5</span>
<span class="t " style="right:417.4px;top:373.4px;font-size:26.6px;line-height:26.6px;color:#30303E;">3,000</span>
<span class="t " style="right:182.9px;top:373.4px;font-size:26.6px;line-height:26.6px;color:#30303E;">3.0</span>
<span class="t " style="right:11.9px;top:373.4px;font-size:26.6px;line-height:26.6px;color:#30303E;">1,000</span>
<span class="t " style="right:720.2px;top:420.4px;font-size:26.6px;line-height:26.6px;color:#30303E;">5</span>
<span class="t " style="right:570.4px;top:420.4px;font-size:26.6px;line-height:26.6px;color:#30303E;">7</span>
<span class="t " style="right:417.4px;top:420.4px;font-size:26.6px;line-height:26.6px;color:#30303E;">2,800</span>
<span class="t " style="right:182.9px;top:420.4px;font-size:26.6px;line-height:26.6px;color:#30303E;">2.8</span>
<span class="t " style="right:11.9px;top:420.4px;font-size:26.6px;line-height:26.6px;color:#30303E;">1,000</span>
<span class="t " style="right:720.2px;top:467.5px;font-size:26.6px;line-height:26.6px;color:#30303E;">4</span>
<span class="t " style="right:570.4px;top:467.5px;font-size:26.6px;line-height:26.6px;color:#30303E;">8</span>
<span class="t " style="right:417.4px;top:467.5px;font-size:26.6px;line-height:26.6px;color:#30303E;">2,000</span>
<span class="t " style="right:182.9px;top:467.5px;font-size:26.6px;line-height:26.6px;color:#30303E;">2.0</span>
<span class="t " style="right:11.9px;top:467.5px;font-size:26.6px;line-height:26.6px;color:#30303E;">1,000</span>
<span class="t " style="right:720.2px;top:514.6px;font-size:26.6px;line-height:26.6px;color:#30303E;">3</span>
<span class="t " style="right:570.4px;top:514.6px;font-size:26.6px;line-height:26.6px;color:#30303E;">5</span>
<span class="t " style="right:417.4px;top:514.6px;font-size:26.6px;line-height:26.6px;color:#30303E;">2,400</span>
<span class="t " style="right:182.9px;top:514.6px;font-size:26.6px;line-height:26.6px;color:#30303E;">2.4</span>
<span class="t " style="right:11.9px;top:514.6px;font-size:26.6px;line-height:26.6px;color:#30303E;">1,000</span>
<span class="t " style="right:720.2px;top:561.7px;font-size:26.6px;line-height:26.6px;color:#30303E;">3</span>
<span class="t " style="right:570.4px;top:561.7px;font-size:26.6px;line-height:26.6px;color:#30303E;">7</span>
<span class="t " style="right:417.4px;top:561.7px;font-size:26.6px;line-height:26.6px;color:#30303E;">2,900</span>
<span class="t " style="right:182.9px;top:561.7px;font-size:26.6px;line-height:26.6px;color:#30303E;">2.9</span>
<span class="t " style="right:11.9px;top:561.7px;font-size:26.6px;line-height:26.6px;color:#30303E;">1,000</span>
<span class="t " style="right:720.2px;top:608.7px;font-size:26.6px;line-height:26.6px;color:#30303E;">3</span>
<span class="t " style="right:570.4px;top:608.7px;font-size:26.6px;line-height:26.6px;color:#30303E;">8</span>
<span class="t " style="right:417.4px;top:608.7px;font-size:26.6px;line-height:26.6px;color:#30303E;">2,200</span>
<span class="t " style="right:182.9px;top:608.7px;font-size:26.6px;line-height:26.6px;color:#30303E;">2.2</span>
<span class="t " style="right:11.9px;top:608.7px;font-size:26.6px;line-height:26.6px;color:#30303E;">1,000</span>
<span class="t " style="right:720.2px;top:655.8px;font-size:26.6px;line-height:26.6px;color:#30303E;">7</span>
<span class="t " style="right:570.4px;top:655.8px;font-size:26.6px;line-height:26.6px;color:#30303E;">8</span>
<span class="t " style="right:417.4px;top:655.8px;font-size:26.6px;line-height:26.6px;color:#30303E;">2,700</span>
<span class="t " style="right:182.9px;top:655.8px;font-size:26.6px;line-height:26.6px;color:#30303E;">2.7</span>
<span class="t " style="right:11.9px;top:655.8px;font-size:26.6px;line-height:26.6px;color:#30303E;">1,000</span>
<div style="left:17.0px;top:267.5px;width:867.5px;height:3.4px;background:#E2E2EA"></div>
<div style="left:17.0px;top:314.6px;width:867.5px;height:3.4px;background:#E2E2EA"></div>
<div style="left:17.0px;top:361.6px;width:867.5px;height:3.4px;background:#E2E2EA"></div>
<div style="left:17.0px;top:408.7px;width:867.5px;height:3.4px;background:#E2E2EA"></div>
<div style="left:17.0px;top:455.8px;width:867.5px;height:3.4px;background:#E2E2EA"></div>
<div style="left:17.0px;top:502.8px;width:867.5px;height:3.4px;background:#E2E2EA"></div>
<div style="left:17.0px;top:549.9px;width:867.5px;height:3.4px;background:#E2E2EA"></div>
<div style="left:17.0px;top:597.0px;width:867.5px;height:3.4px;background:#E2E2EA"></div>
<div style="left:17.0px;top:644.1px;width:867.5px;height:3.4px;background:#E2E2EA"></div>
<div style="left:17.0px;top:691.1px;width:867.5px;height:3.4px;background:#E2E2EA"></div>
<div style="left:174.5px;top:218.2px;width:3.4px;height:474.6px;background:#E0E0E8"></div>
<div style="left:324.3px;top:218.2px;width:3.4px;height:474.6px;background:#E0E0E8"></div>
<div style="left:477.3px;top:218.2px;width:3.4px;height:474.6px;background:#E0E0E8"></div>
<div style="left:711.8px;top:218.2px;width:3.4px;height:474.6px;background:#E0E0E8"></div>
<div style="left:882.8px;top:218.2px;width:3.4px;height:474.6px;background:#E0E0E8"></div>
<div style="left:10.0px;top:69.0px;width:2.5px;height:1263.0px;background:#C9C9E4"></div>
<div style="left:12.2px;top:69.0px;width:4.2px;height:1263.0px;background:#25258E"></div>
<div style="left:15.9px;top:131.0px;width:2.4px;height:1201.0px;background:#B4B4BC"></div>
<div style="left:885.4px;top:69.0px;width:4.2px;height:1263.0px;background:#3A3A9E"></div>
<div style="left:3.0px;top:681.0px;width:6.0px;height:34.0px;background:repeating-linear-gradient(#B9B9C0 0,#B9B9C0 2.4px,#F4F4F6 2.4px,#F4F4F6 4.9px)"></div>
</section>
<section class="seq" style="left:3400.5px;top:36px;width:893.0px;height:1332px">
<h2 class="t" style="left:12px;top:6.8px;font-size:42px;line-height:42px;letter-spacing:-1.9px;color:#3E3E4A">Sequences</h2>
<div style="left:12.5px;top:69.0px;width:877.1px;height:1263.0px;background:#fff"></div>
<div style="left:12.5px;top:66.0px;width:877.1px;height:62.0px;background:linear-gradient(#B6B6DC 0,#B6B6DC 2.6px,#5858B2 2.8px,#5858B2 6px,#F0F0F6 6.4px,#E6E6F0 40%,#C4C3DA 72%,#ACABC9 100%)"></div>
<div style="left:12.5px;top:124.0px;width:877.1px;height:4.7px;background:#5C52A6"></div>
<div style="left:12.5px;top:128.7px;width:877.1px;height:4.0px;background:#FFC67C"></div>
<div style="left:12.5px;top:132.6px;width:877.1px;height:2.4px;background:#ABA391"></div>
<div style="left:243.3px;top:75.0px;width:230.0px;height:57.6px;background:linear-gradient(#FF8E4E,#FFA468 45%,#FFC988 85%,#FFD494);border:3.2px solid #4444A4;border-bottom:none;box-sizing:border-box;border-radius:2px 2px 0 0"></div>
<span class="t b dj" style="left:32.3px;top:91.9px;font-size:27.7px;line-height:27.7px;color:#14141C;">Subdomain 1</span>
<span class="t b dj" style="left:258.6px;top:91.9px;font-size:27.7px;line-height:27.7px;color:#14141C;">Subdomain 2</span>
<div style="left:15.5px;top:135.0px;width:871.1px;height:80.0px;background:#E6E7EF"></div>
<div style="left:24.3px;top:158.0px;width:81.5px;height:41.5px;background:#FF6040;border:2.6px solid #7E7E8A;box-sizing:border-box"></div>
<span class="t " style="left:119.5px;top:167.4px;font-size:26.0px;line-height:26.0px;color:#3A3A46;">Subdomain 2</span>
<div style="left:15.5px;top:213.4px;width:871.1px;height:5.0px;background:#7E7E82"></div>
<div style="left:17.0px;top:218.2px;width:867.5px;height:48.6px;background:linear-gradient(#F6F6F8,#F1F1F4)"></div>
<span class="t " style="left:23.5px;top:228.3px;font-size:27.1px;line-height:27.1px;color:#30303E;">Probe +</span>
<span class="t " style="left:182.7px;top:228.3px;font-size:27.1px;line-height:27.1px;color:#30303E;">Probe -</span>
<span class="t " style="left:332.5px;top:228.3px;font-size:27.1px;line-height:27.1px;color:#30303E;">Voltage</span>
<span class="t " style="left:485.5px;top:228.3px;font-size:27.1px;line-height:27.1px;color:#30303E;">Distance (cm)</span>
<span class="t " style="left:720.0px;top:228.3px;font-size:27.1px;line-height:27.1px;color:#30303E;">Volts/cm</span>
<div style="left:17.0px;top:266.8px;width:867.5px;height:47.1px;background:#EEEFF1"></div>
<span class="t " style="right:723.6px;top:276.8px;font-size:26.6px;line-height:26.6px;color:#30303E;">2</span>
<span class="t " style="right:573.8px;top:276.8px;font-size:26.6px;line-height:26.6px;color:#30303E;">4</span>
<span class="t " style="right:420.8px;top:276.8px;font-size:26.6px;line-height:26.6px;color:#30303E;">2,800</span>
<span class="t " style="right:186.3px;top:276.8px;font-size:26.6px;line-height:26.6px;color:#30303E;">2.8</span>
<span class="t " style="right:15.3px;top:276.8px;font-size:26.6px;line-height:26.6px;color:#30303E;">1,000</span>
<span class="t " style="right:723.6px;top:323.9px;font-size:26.6px;line-height:26.6px;color:#30303E;">2</span>
<span class="t " style="right:573.8px;top:323.9px;font-size:26.6px;line-height:26.6px;color:#30303E;">8</span>
<span class="t " style="right:420.8px;top:323.9px;font-size:26.6px;line-height:26.6px;color:#30303E;">2,700</span>
<span class="t " style="right:186.3px;top:323.9px;font-size:26.6px;line-height:26.6px;color:#30303E;">2.7</span>
<span class="t " style="right:15.3px;top:323.9px;font-size:26.6px;line-height:26.6px;color:#30303E;">1,000</span>
<span class="t " style="right:723.6px;top:371.0px;font-size:26.6px;line-height:26.6px;color:#30303E;">2</span>
<span class="t " style="right:573.8px;top:371.0px;font-size:26.6px;line-height:26.6px;color:#30303E;">6</span>
<span class="t " style="right:420.8px;top:371.0px;font-size:26.6px;line-height:26.6px;color:#30303E;">2,800</span>
<span class="t " style="right:186.3px;top:371.0px;font-size:26.6px;line-height:26.6px;color:#30303E;">2.8</span>
<span class="t " style="right:15.3px;top:371.0px;font-size:26.6px;line-height:26.6px;color:#30303E;">1,000</span>
<span class="t " style="right:723.6px;top:418.0px;font-size:26.6px;line-height:26.6px;color:#30303E;">6</span>
<span class="t " style="right:573.8px;top:418.0px;font-size:26.6px;line-height:26.6px;color:#30303E;">8</span>
<span class="t " style="right:420.8px;top:418.0px;font-size:26.6px;line-height:26.6px;color:#30303E;">2,200</span>
<span class="t " style="right:186.3px;top:418.0px;font-size:26.6px;line-height:26.6px;color:#30303E;">2.2</span>
<span class="t " style="right:15.3px;top:418.0px;font-size:26.6px;line-height:26.6px;color:#30303E;">1,000</span>
<span class="t " style="right:723.6px;top:465.1px;font-size:26.6px;line-height:26.6px;color:#30303E;">3</span>
<span class="t " style="right:573.8px;top:465.1px;font-size:26.6px;line-height:26.6px;color:#30303E;">6</span>
<span class="t " style="right:420.8px;top:465.1px;font-size:26.6px;line-height:26.6px;color:#30303E;">2,800</span>
<span class="t " style="right:186.3px;top:465.1px;font-size:26.6px;line-height:26.6px;color:#30303E;">2.8</span>
<span class="t " style="right:15.3px;top:465.1px;font-size:26.6px;line-height:26.6px;color:#30303E;">1,000</span>
<div style="left:17.0px;top:265.1px;width:867.5px;height:3.4px;background:#E2E2EA"></div>
<div style="left:17.0px;top:312.2px;width:867.5px;height:3.4px;background:#E2E2EA"></div>
<div style="left:17.0px;top:359.2px;width:867.5px;height:3.4px;background:#E2E2EA"></div>
<div style="left:17.0px;top:406.3px;width:867.5px;height:3.4px;background:#E2E2EA"></div>
<div style="left:17.0px;top:453.4px;width:867.5px;height:3.4px;background:#E2E2EA"></div>
<div style="left:17.0px;top:500.4px;width:867.5px;height:3.4px;background:#E2E2EA"></div>
<div style="left:174.5px;top:218.2px;width:3.4px;height:284.0px;background:#E0E0E8"></div>
<div style="left:324.3px;top:218.2px;width:3.4px;height:284.0px;background:#E0E0E8"></div>
<div style="left:477.3px;top:218.2px;width:3.4px;height:284.0px;background:#E0E0E8"></div>
<div style="left:711.8px;top:218.2px;width:3.4px;height:284.0px;background:#E0E0E8"></div>
<div style="left:882.8px;top:218.2px;width:3.4px;height:284.0px;background:#E0E0E8"></div>
<div style="left:10.0px;top:69.0px;width:2.5px;height:1263.0px;background:#C9C9E4"></div>
<div style="left:12.2px;top:69.0px;width:4.2px;height:1263.0px;background:#25258E"></div>
<div style="left:15.9px;top:131.0px;width:2.4px;height:1201.0px;background:#B4B4BC"></div>
<div style="left:885.4px;top:69.0px;width:4.2px;height:1263.0px;background:#3A3A9E"></div>
<div style="left:3.0px;top:681.0px;width:6.0px;height:34.0px;background:repeating-linear-gradient(#B9B9C0 0,#B9B9C0 2.4px,#F4F4F6 2.4px,#F4F4F6 4.9px)"></div>
</section>
</body></html>
